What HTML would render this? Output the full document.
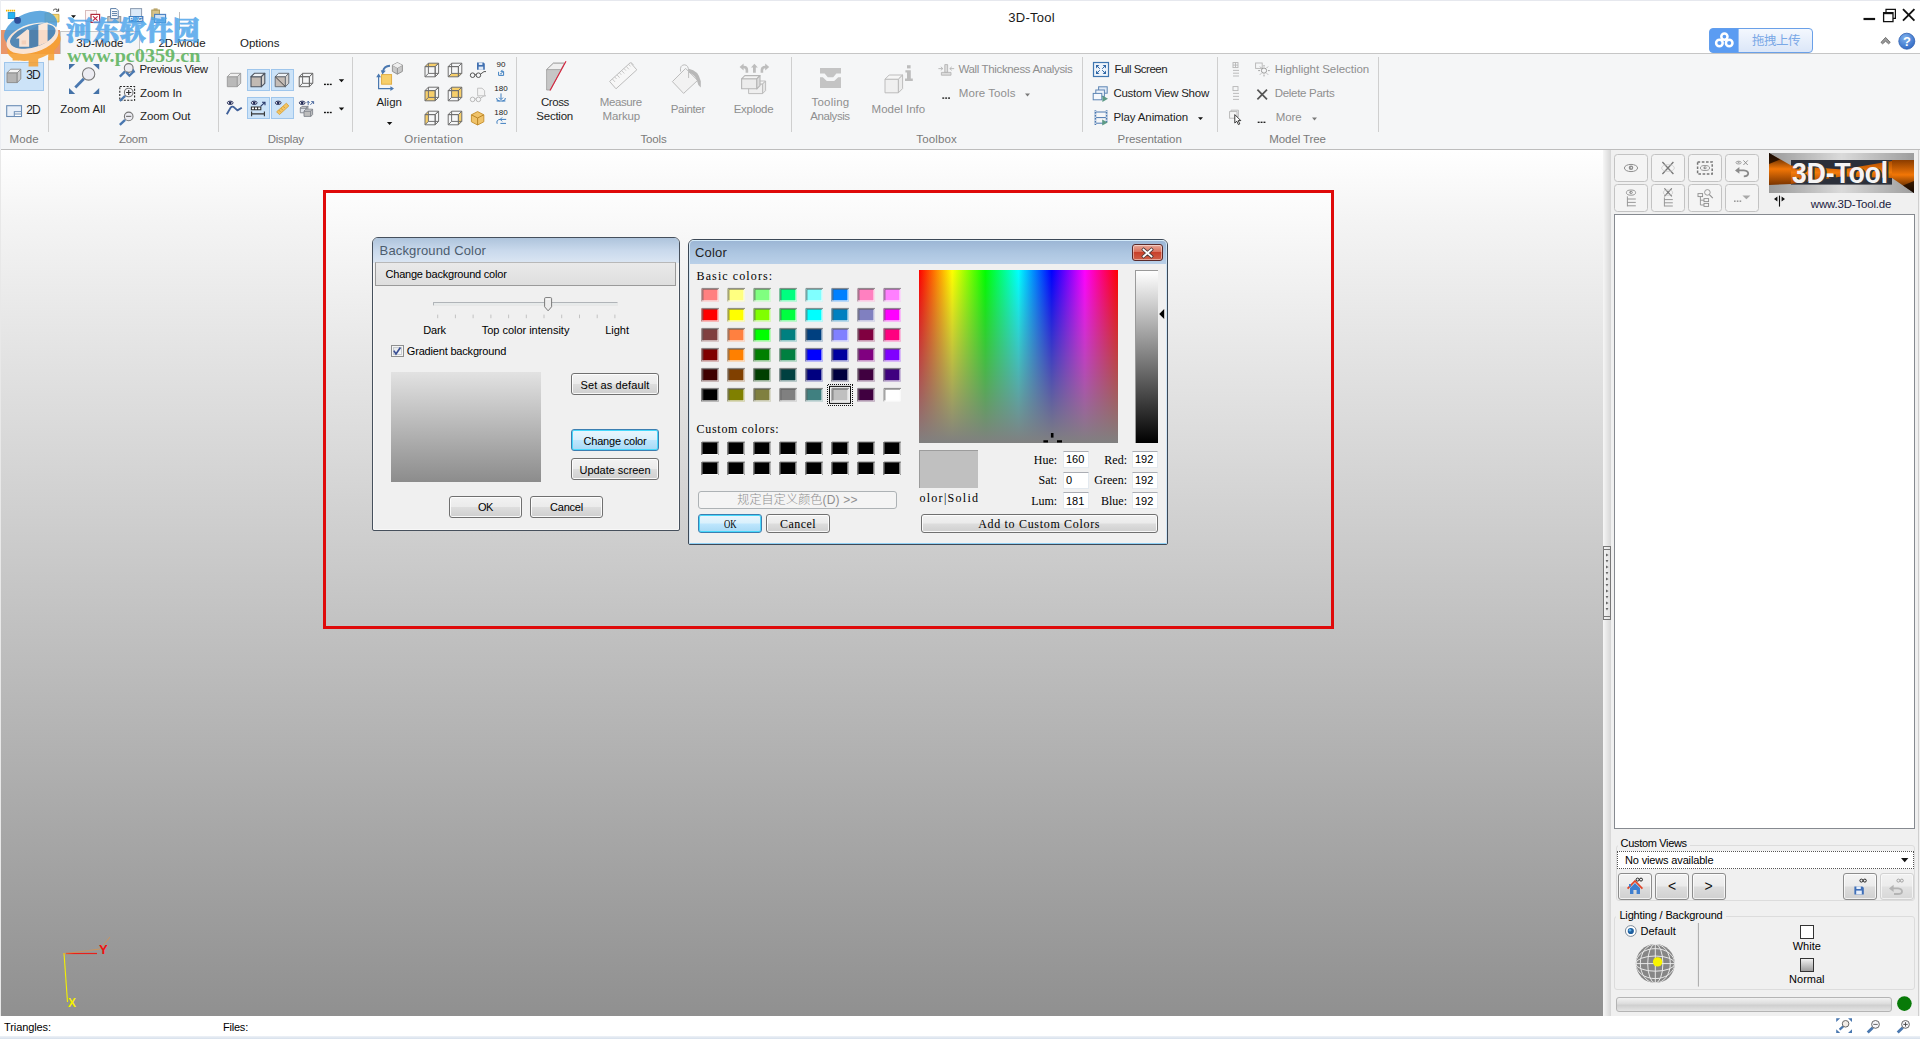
<!DOCTYPE html>
<html lang="en"><head><meta charset="utf-8"><title>3D-Tool</title>
<style>
html,body{margin:0;padding:0;}
body{width:1920px;height:1039px;overflow:hidden;position:relative;background:#fff;font-family:"Liberation Sans",sans-serif;font-size:11px;color:#000;}
.b{position:absolute;box-sizing:border-box;display:block;}
.t{position:absolute;white-space:nowrap;display:block;}
svg{overflow:visible;}

</style></head>
<body>
<!-- frame -->
<div class="b" style="left:0px;top:53px;width:1920px;height:97px;background:#f5f6f7;border-top:1px solid #c6c6c6;border-bottom:1px solid #bdbdbd;"></div>
<div class="b" style="left:0px;top:150px;width:1603px;height:866px;background:linear-gradient(to bottom,#ffffff 0%,#f4f4f4 8%,#909090 100%);"></div>
<div class="b" style="left:0px;top:150px;width:1px;height:866px;background:#e8e8e8;"></div>
<div class="b" style="left:323px;top:190px;width:1011px;height:439px;border:3px solid #df0a0a;background:linear-gradient(to bottom,#fdfdfd 0%,#c2c2c2 100%);"></div>
<div class="b" style="left:1603px;top:150px;width:8px;height:866px;background:linear-gradient(to right,#f6f6f6,#d6d6d6);"></div>
<div class="b" style="left:1603px;top:546px;width:8px;height:74px;border:1px solid #777;background:linear-gradient(to right,#f4f4f4,#e0e0e0);"></div>
<div class="b" style="left:1604px;top:549px;width:6px;height:1px;background:#777;"></div>
<div class="b" style="left:1604px;top:616px;width:6px;height:1px;background:#777;"></div>
<svg class="b" style="left:1605px;top:0px;" width="6" height="1039" viewBox="0 0 6 1039"><path d="M1 553.4 l2.6 1.6 l-2.6 1.6z" fill="#666"/><path d="M0.6 560 l2.8 0 l-1.4 2.6z" fill="#666"/><path d="M1 565.4 l2.6 1.6 l-2.6 1.6z" fill="#666"/><path d="M0.6 572 l2.8 0 l-1.4 2.6z" fill="#666"/><path d="M1 577.4 l2.6 1.6 l-2.6 1.6z" fill="#666"/><path d="M0.6 584 l2.8 0 l-1.4 2.6z" fill="#666"/><path d="M1 589.4 l2.6 1.6 l-2.6 1.6z" fill="#666"/><path d="M0.6 596 l2.8 0 l-1.4 2.6z" fill="#666"/><path d="M1 601.4 l2.6 1.6 l-2.6 1.6z" fill="#666"/><path d="M0.6 608 l2.8 0 l-1.4 2.6z" fill="#666"/></svg>
<div class="b" style="left:1611px;top:150px;width:309px;height:866px;background:#f0f0f0;"></div>
<div class="b" style="left:0px;top:1016px;width:1920px;height:23px;background:#ffffff;"></div>
<div class="b" style="left:0px;top:1036px;width:1920px;height:3px;background:linear-gradient(to bottom,#eef2f7,#d7e0ec);"></div>
<span class="t" style="left:4.0px;top:1019.5px;font-size:11px;line-height:15px;color:#000;letter-spacing:-0.089px;">Triangles:</span>
<span class="t" style="left:223.0px;top:1019.5px;font-size:11px;line-height:15px;color:#000;letter-spacing:-0.214px;">Files:</span>
<svg class="b" style="left:0px;top:0px;" width="200" height="1039" viewBox="0 0 200 1039"><path d="M64 953 L67.5 1002" stroke="#f4f000" stroke-width="1.1" fill="none"/><path d="M66 953.5 L97 953.5" stroke="#e8201a" stroke-width="1.2" fill="none"/><path d="M63 954 L100 949 L110 937" stroke="#f09030" stroke-width="1" fill="none" opacity="0.55"/></svg>
<span class="t" style="left:99.0px;top:940.5px;font-size:13px;line-height:17px;color:#f01010;font-weight:bold;">Y</span>
<span class="t" style="left:68.0px;top:994.5px;font-size:12px;line-height:16px;color:#f4f000;font-weight:bold;">X</span>
<!-- ribbon -->
<div class="b" style="left:48px;top:57px;width:1px;height:75px;background:#cfcfcf;"></div>
<div class="b" style="left:218px;top:57px;width:1px;height:75px;background:#cfcfcf;"></div>
<div class="b" style="left:352px;top:57px;width:1px;height:75px;background:#cfcfcf;"></div>
<div class="b" style="left:516px;top:57px;width:1px;height:75px;background:#cfcfcf;"></div>
<div class="b" style="left:791px;top:57px;width:1px;height:75px;background:#cfcfcf;"></div>
<div class="b" style="left:1082px;top:57px;width:1px;height:75px;background:#cfcfcf;"></div>
<div class="b" style="left:1217px;top:57px;width:1px;height:75px;background:#cfcfcf;"></div>
<div class="b" style="left:1378px;top:57px;width:1px;height:75px;background:#cfcfcf;"></div>
<span class="t" style="left:9.6px;top:131.6px;font-size:11.5px;line-height:15.5px;color:#7a7a7a;letter-spacing:0.055px;">Mode</span>
<span class="t" style="left:119.0px;top:131.6px;font-size:11.5px;line-height:15.5px;color:#7a7a7a;letter-spacing:-0.277px;">Zoom</span>
<span class="t" style="left:267.7px;top:131.6px;font-size:11.5px;line-height:15.5px;color:#7a7a7a;letter-spacing:-0.217px;">Display</span>
<span class="t" style="left:404.3px;top:131.6px;font-size:11.5px;line-height:15.5px;color:#7a7a7a;letter-spacing:0.249px;">Orientation</span>
<span class="t" style="left:640.5px;top:131.6px;font-size:11.5px;line-height:15.5px;color:#7a7a7a;letter-spacing:-0.172px;">Tools</span>
<span class="t" style="left:916.3px;top:131.6px;font-size:11.5px;line-height:15.5px;color:#7a7a7a;letter-spacing:0.137px;">Toolbox</span>
<span class="t" style="left:1117.5px;top:131.6px;font-size:11.5px;line-height:15.5px;color:#7a7a7a;letter-spacing:-0.023px;">Presentation</span>
<span class="t" style="left:1269.3px;top:131.6px;font-size:11.5px;line-height:15.5px;color:#7a7a7a;letter-spacing:-0.093px;">Model Tree</span>
<div class="b" style="left:4px;top:61.5px;width:40px;height:29px;background:#cce3f8;border:1px solid #9fc6ec;"></div>
<span class="t" style="left:26.3px;top:67.0px;font-size:12px;line-height:16px;color:#1e1e1e;letter-spacing:-1.072px;">3D</span>
<span class="t" style="left:26.3px;top:102.0px;font-size:12px;line-height:16px;color:#1e1e1e;letter-spacing:-1.072px;">2D</span>
<span class="t" style="left:60.2px;top:101.8px;font-size:11.5px;line-height:15.5px;color:#1e1e1e;letter-spacing:0.056px;">Zoom All</span>
<span class="t" style="left:139.5px;top:61.5px;font-size:11.5px;line-height:15.5px;color:#1e1e1e;letter-spacing:-0.335px;">Previous View</span>
<span class="t" style="left:140.0px;top:85.5px;font-size:11.5px;line-height:15.5px;color:#1e1e1e;letter-spacing:-0.027px;">Zoom In</span>
<span class="t" style="left:140.0px;top:109.3px;font-size:11.5px;line-height:15.5px;color:#1e1e1e;letter-spacing:-0.093px;">Zoom Out</span>
<div class="b" style="left:247px;top:69px;width:23px;height:22px;background:#cce3f8;border:1px solid #9fc6ec;"></div>
<div class="b" style="left:271px;top:69px;width:23px;height:22px;background:#cce3f8;border:1px solid #9fc6ec;"></div>
<div class="b" style="left:247px;top:97px;width:23px;height:22px;background:#cce3f8;border:1px solid #9fc6ec;"></div>
<div class="b" style="left:271px;top:97px;width:23px;height:22px;background:#cce3f8;border:1px solid #9fc6ec;"></div>
<span class="t" style="left:376.4px;top:94.7px;font-size:11.5px;line-height:15.5px;color:#1e1e1e;letter-spacing:0.004px;">Align</span>
<span class="t" style="left:501.0px;transform:translateX(-50%);top:60.1px;font-size:8px;line-height:9px;color:#222;">90</span>
<span class="t" style="left:501.0px;transform:translateX(-50%);top:84.1px;font-size:8px;line-height:9px;color:#222;">180</span>
<span class="t" style="left:501.0px;transform:translateX(-50%);top:108.1px;font-size:8px;line-height:9px;color:#222;">180</span>
<span class="t" style="left:541.0px;top:94.7px;font-size:11.5px;line-height:15.5px;color:#1e1e1e;letter-spacing:-0.466px;">Cross</span>
<span class="t" style="left:536.3px;top:108.5px;font-size:11.5px;line-height:15.5px;color:#1e1e1e;letter-spacing:-0.237px;">Section</span>
<span class="t" style="left:599.8px;top:94.7px;font-size:11.5px;line-height:15.5px;color:#8f8f8f;letter-spacing:-0.407px;">Measure</span>
<span class="t" style="left:602.5px;top:108.5px;font-size:11.5px;line-height:15.5px;color:#8f8f8f;letter-spacing:-0.143px;">Markup</span>
<span class="t" style="left:670.7px;top:101.5px;font-size:11.5px;line-height:15.5px;color:#8f8f8f;letter-spacing:-0.305px;">Painter</span>
<span class="t" style="left:733.7px;top:101.5px;font-size:11.5px;line-height:15.5px;color:#8f8f8f;letter-spacing:-0.266px;">Explode</span>
<span class="t" style="left:811.6px;top:94.7px;font-size:11.5px;line-height:15.5px;color:#8f8f8f;letter-spacing:0.192px;">Tooling</span>
<span class="t" style="left:810.3px;top:108.5px;font-size:11.5px;line-height:15.5px;color:#8f8f8f;letter-spacing:-0.429px;">Analysis</span>
<span class="t" style="left:871.6px;top:101.5px;font-size:11.5px;line-height:15.5px;color:#8f8f8f;letter-spacing:-0.010px;">Model Info</span>
<span class="t" style="left:958.4px;top:61.5px;font-size:11.5px;line-height:15.5px;color:#8f8f8f;letter-spacing:-0.347px;">Wall Thickness Analysis</span>
<span class="t" style="left:958.8px;top:85.5px;font-size:11.5px;line-height:15.5px;color:#8f8f8f;letter-spacing:0.065px;">More Tools</span>
<span class="t" style="left:1114.4px;top:61.8px;font-size:11.5px;line-height:15.5px;color:#1e1e1e;letter-spacing:-0.488px;">Full Screen</span>
<span class="t" style="left:1113.4px;top:85.7px;font-size:11.5px;line-height:15.5px;color:#1e1e1e;letter-spacing:-0.244px;">Custom View Show</span>
<span class="t" style="left:1113.4px;top:109.5px;font-size:11.5px;line-height:15.5px;color:#1e1e1e;letter-spacing:-0.106px;">Play Animation</span>
<span class="t" style="left:1274.7px;top:61.8px;font-size:11.5px;line-height:15.5px;color:#8f8f8f;letter-spacing:-0.040px;">Highlight Selection</span>
<span class="t" style="left:1274.7px;top:85.7px;font-size:11.5px;line-height:15.5px;color:#8f8f8f;letter-spacing:-0.298px;">Delete Parts</span>
<span class="t" style="left:1275.8px;top:109.5px;font-size:11.5px;line-height:15.5px;color:#8f8f8f;letter-spacing:-0.101px;">More</span>
<svg class="b" style="left:0px;top:0px;" width="1920" height="150" viewBox="0 0 1920 150"><path d="M7 72.8 H17.2 V82.6 H7z" fill="#b4b4b4" stroke="#8a8a8a" stroke-width="0.9" stroke-linejoin="round"/><path d="M7 72.8 L10.6 69.2 H20.8 L17.2 72.8z" fill="#f4f4f4" stroke="#8a8a8a" stroke-width="0.9" stroke-linejoin="round"/><path d="M17.2 72.8 L20.8 69.2 V79 L17.2 82.6z" fill="#c9c9c9" stroke="#8a8a8a" stroke-width="0.9" stroke-linejoin="round"/><rect x="6.7" y="105.7" width="14.8" height="10.8" fill="#e9f0f9" stroke="#6b8db6" stroke-width="1.1"/><rect x="14.3" y="111.7" width="7.2" height="4.8" fill="#fff" stroke="#6b8db6" stroke-width="1"/><path d="M14.3 114 h7.2" stroke="#6b8db6" stroke-width="1"/><path d="M69 64 h6.2 l-6.2 5.8z M99.2 64 v5.8 l-6.2 -5.8z M69 93.9 v-5.8 l6.2 5.8z M99.2 93.9 h-6.2 l6.2 -5.8z" fill="#4472a8"/><path d="M83.85 78.76 L75.30 87.50" stroke="#4a78b0" stroke-width="2.8" fill="none"/><circle cx="88.6" cy="73.9" r="6.2" fill="#ececf2" stroke="#777" stroke-width="1.1"/><path d="M125.10 71.47 L119.80 76.60" stroke="#4a78b0" stroke-width="2.4" fill="none"/><circle cx="128.7" cy="68" r="4.4" fill="#ececf2" stroke="#777" stroke-width="1.1"/><path d="M126.2 72.2 l3.2 3.4 l4.6 -4.4" fill="none" stroke="#4a78b0" stroke-width="2.2"/><path d="M133.4 68.6 l2 3.6 l-3.8 0.4z" fill="#4a78b0"/><rect x="119.8" y="86.5" width="14.8" height="13.8" fill="none" stroke="#222" stroke-width="1.1" stroke-dasharray="2 1.4"/><path d="M125.16 95.88 L119.80 101.00" stroke="#4a78b0" stroke-width="2.4" fill="none"/><circle cx="128.7" cy="92.5" r="4.3" fill="#f4f4f8" stroke="#777" stroke-width="1.1"/><path d="M126.1 92.5 h5.2 M128.7 89.9 v5.2" stroke="#333" stroke-width="1.1"/><path d="M125.14 119.76 L119.80 124.80" stroke="#4a78b0" stroke-width="2.4" fill="none"/><circle cx="128.7" cy="116.4" r="4.3" fill="#ececf2" stroke="#777" stroke-width="1.1"/><path d="M126.1 116.4 h5.2" stroke="#777" stroke-width="1.2"/><path d="M227.3 76.7 H237.3 V86.7 H227.3z" fill="#b9b9b9" stroke="#9a9a9a" stroke-width="0.9" stroke-linejoin="round"/><path d="M227.3 76.7 L230.7 73.3 H240.7 L237.3 76.7z" fill="#f0f0f0" stroke="#9a9a9a" stroke-width="0.9" stroke-linejoin="round"/><path d="M237.3 76.7 L240.7 73.3 V83.3 L237.3 86.7z" fill="#cfcfcf" stroke="#9a9a9a" stroke-width="0.9" stroke-linejoin="round"/><path d="M251 76.7 H261.4 V86.7 H251z" fill="#c2bab3" stroke="#4e5560" stroke-width="1.1" stroke-linejoin="round"/><path d="M251 76.7 L254.4 73.3 H264.8 L261.4 76.7z" fill="#eef2f6" stroke="#4e5560" stroke-width="1.1" stroke-linejoin="round"/><path d="M261.4 76.7 L264.8 73.3 V83.3 L261.4 86.7z" fill="#d5d2cf" stroke="#4e5560" stroke-width="1.1" stroke-linejoin="round"/><path d="M275.2 76.7 H285.4 V86.7 H275.2z" fill="#c4bcb6" stroke="#6a7078" stroke-width="1" stroke-linejoin="round"/><path d="M275.2 76.7 L278.6 73.3 H288.8 L285.4 76.7z" fill="#eef2f6" stroke="#6a7078" stroke-width="1" stroke-linejoin="round"/><path d="M285.4 76.7 L288.8 73.3 V83.3 L285.4 86.7z" fill="#d5d2cf" stroke="#6a7078" stroke-width="1" stroke-linejoin="round"/><path d="M275.2 76.7 L285.4 86.7" stroke="#444" stroke-width="1"/><path d="M299.2 76.7 H309.4 V86.7 H299.2z" fill="none" stroke="#6a6a6a" stroke-width="1" stroke-linejoin="round"/><path d="M299.2 76.7 L302.6 73.3 H312.8 L309.4 76.7z" fill="none" stroke="#6a6a6a" stroke-width="1" stroke-linejoin="round"/><path d="M309.4 76.7 L312.8 73.3 V83.3 L309.4 86.7z" fill="none" stroke="#6a6a6a" stroke-width="1" stroke-linejoin="round"/><path d="M302.6 73.3 V83.3 H312.8 M302.6 83.3 L299.2 86.7" fill="none" stroke="#6a6a6a" stroke-width="1"/><rect x="324" y="83.7" width="1.9" height="1.4" fill="#111"/><rect x="326.9" y="83.7" width="1.9" height="1.4" fill="#111"/><rect x="329.8" y="83.7" width="1.9" height="1.4" fill="#111"/><path d="M338.8 79.3 h5.4 l-2.7 3z" fill="#111"/><rect x="324" y="111.8" width="1.9" height="1.4" fill="#111"/><rect x="326.9" y="111.8" width="1.9" height="1.4" fill="#111"/><rect x="329.8" y="111.8" width="1.9" height="1.4" fill="#111"/><path d="M338.8 107.4 h5.4 l-2.7 3z" fill="#111"/><ellipse cx="230.2" cy="102.8" rx="2.9" ry="1.7" fill="#fff" stroke="#1c2450" stroke-width="0.9"/><circle cx="230.2" cy="102.8" r="1.35" fill="#1c2450"/><path d="M226.8 114.2 L230.6 107.6 Q232.4 105.6 234.4 107.6 L237.4 110.4 L241.8 107.8" fill="none" stroke="#41619a" stroke-width="1.9" stroke-linejoin="round"/><ellipse cx="254.2" cy="102.8" rx="2.9" ry="1.7" fill="#fff" stroke="#1c2450" stroke-width="0.9"/><circle cx="254.2" cy="102.8" r="1.35" fill="#1c2450"/><path d="M251.4 107 h9.4 v2.8 h-9.4z M254.5 107 v2.8 M257.6 107 v2.8" fill="#fff" stroke="#333" stroke-width="1.1"/><path d="M260.6 106.4 L264.6 102.6 M262 102.2 h3 v3" fill="none" stroke="#2a3a6a" stroke-width="1.1"/><path d="M251.6 111.6 v4.6 M264.4 111.6 v4.6 M251.6 113.9 h12.8" fill="none" stroke="#333" stroke-width="1.1"/><ellipse cx="278.2" cy="102.8" rx="2.9" ry="1.7" fill="#fff" stroke="#1c2450" stroke-width="0.9"/><circle cx="278.2" cy="102.8" r="1.35" fill="#1c2450"/><path d="M276.6 111.8 L286.4 103.2 L288.8 106 L279.4 114.6z" fill="#f3c462" stroke="#d9a33a" stroke-width="0.9"/><path d="M279.2 110.4 l1 1.2 M281.4 108.5 l1 1.2 M283.6 106.6 l1 1.2" stroke="#b98420" stroke-width="0.8"/><ellipse cx="302.2" cy="102.8" rx="2.9" ry="1.7" fill="#fff" stroke="#1c2450" stroke-width="0.9"/><circle cx="302.2" cy="102.8" r="1.35" fill="#1c2450"/><path d="M308.2 105.2 v-3.6 M306.8 102.8 l1.4 -1.6 l1.4 1.6 M310.4 104.8 l3 -3 M311.2 101.6 h2.4 v2.4" fill="none" stroke="#3b5c96" stroke-width="0.9"/><path d="M300.3 108 H306.3 V112.8 H300.3z" fill="#dfe3ea" stroke="#7a7f88" stroke-width="0.9" stroke-linejoin="round"/><path d="M300.3 108 L301.9 106.4 H307.9 L306.3 108z" fill="#f2f2f2" stroke="#7a7f88" stroke-width="0.9" stroke-linejoin="round"/><path d="M306.3 108 L307.9 106.4 V111.2 L306.3 112.8z" fill="#c8c8c8" stroke="#7a7f88" stroke-width="0.9" stroke-linejoin="round"/><path d="M304 111 H310.8 V116.4 H304z" fill="#bdbdbd" stroke="#80858c" stroke-width="0.9" stroke-linejoin="round"/><path d="M304 111 L305.8 109.2 H312.6 L310.8 111z" fill="#e6e6e6" stroke="#80858c" stroke-width="0.9" stroke-linejoin="round"/><path d="M310.8 111 L312.6 109.2 V114.6 L310.8 116.4z" fill="#cfcfcf" stroke="#80858c" stroke-width="0.9" stroke-linejoin="round"/><path d="M378.6 74.5 V88.6 H392.6" fill="none" stroke="#4a78b0" stroke-width="1.2"/><path d="M376.2 77.2 l2.4 -3.6 l2.4 3.6z M390.4 86.2 l3.6 2.4 l-3.6 2.4z" fill="#4a78b0"/><rect x="381.6" y="74.6" width="10" height="9.6" fill="#f7cf6b" stroke="#e0a93a" stroke-width="0.9"/><path d="M383 71.4 q1 -5.2 7 -5.6" fill="none" stroke="#4a78b0" stroke-width="2"/><path d="M380.8 70.2 l5 0.6 l-3.4 3.6z" fill="#4a78b0"/><path d="M397.4 62.6 l5 2.6 v6.2 l-5 2.8 l-5 -2.8 v-6.2z" fill="#c9c9c9" stroke="#8d8d8d" stroke-width="0.9"/><path d="M392.4 65.2 l5 2.8 l5 -2.8 M397.4 68 v6.2" fill="none" stroke="#8d8d8d" stroke-width="0.9"/><path d="M397.4 62.8 l4.8 2.5 l-4.8 2.6 l-4.8 -2.6z" fill="#efefef"/><path d="M386.9 122 h5.4 l-2.7 3z" fill="#111"/><path d="M425 66.6 H435.2 V76.8 H425z" fill="none" stroke="#707070" stroke-width="1" stroke-linejoin="round"/><path d="M425 66.6 L428.4 63.2 H438.6 L435.2 66.6z" fill="#f7cf6b" stroke="#707070" stroke-width="1" stroke-linejoin="round"/><path d="M435.2 66.6 L438.6 63.2 V73.4 L435.2 76.8z" fill="none" stroke="#707070" stroke-width="1" stroke-linejoin="round"/><path d="M428.4 63.2 V73.4 H438.6 M428.4 73.4 L425 76.8" fill="none" stroke="#707070" stroke-width="1"/><path d="M448.2 76.8 L451.6 73.4 H461.8 L458.4 76.8z" fill="#f7cf6b"/><path d="M448.2 66.6 H458.4 V76.8 H448.2z" fill="none" stroke="#707070" stroke-width="1" stroke-linejoin="round"/><path d="M448.2 66.6 L451.6 63.2 H461.8 L458.4 66.6z" fill="none" stroke="#707070" stroke-width="1" stroke-linejoin="round"/><path d="M458.4 66.6 L461.8 63.2 V73.4 L458.4 76.8z" fill="none" stroke="#707070" stroke-width="1" stroke-linejoin="round"/><path d="M451.6 63.2 V73.4 H461.8 M451.6 73.4 L448.2 76.8" fill="none" stroke="#707070" stroke-width="1"/><path d="M425 90.6 H435.2 V100.8 H425z" fill="#f7cf6b" stroke="#707070" stroke-width="1" stroke-linejoin="round"/><path d="M425 90.6 L428.4 87.2 H438.6 L435.2 90.6z" fill="none" stroke="#707070" stroke-width="1" stroke-linejoin="round"/><path d="M435.2 90.6 L438.6 87.2 V97.4 L435.2 100.8z" fill="none" stroke="#707070" stroke-width="1" stroke-linejoin="round"/><path d="M428.4 87.2 V97.4 H438.6 M428.4 97.4 L425 100.8" fill="none" stroke="#707070" stroke-width="1"/><rect x="451.6" y="87.2" width="10.2" height="10.2" fill="#f7cf6b"/><path d="M448.2 90.6 H458.4 V100.8 H448.2z" fill="none" stroke="#707070" stroke-width="1" stroke-linejoin="round"/><path d="M448.2 90.6 L451.6 87.2 H461.8 L458.4 90.6z" fill="none" stroke="#707070" stroke-width="1" stroke-linejoin="round"/><path d="M458.4 90.6 L461.8 87.2 V97.4 L458.4 100.8z" fill="none" stroke="#707070" stroke-width="1" stroke-linejoin="round"/><path d="M451.6 87.2 V97.4 H461.8 M451.6 97.4 L448.2 100.8" fill="none" stroke="#707070" stroke-width="1"/><path d="M425 114.6 L428.4 111.2 V121.4 L425 124.8z" fill="#f7cf6b"/><path d="M425 114.6 H435.2 V124.8 H425z" fill="none" stroke="#707070" stroke-width="1" stroke-linejoin="round"/><path d="M425 114.6 L428.4 111.2 H438.6 L435.2 114.6z" fill="none" stroke="#707070" stroke-width="1" stroke-linejoin="round"/><path d="M435.2 114.6 L438.6 111.2 V121.4 L435.2 124.8z" fill="none" stroke="#707070" stroke-width="1" stroke-linejoin="round"/><path d="M428.4 111.2 V121.4 H438.6 M428.4 121.4 L425 124.8" fill="none" stroke="#707070" stroke-width="1"/><path d="M448.2 114.6 H458.4 V124.8 H448.2z" fill="none" stroke="#707070" stroke-width="1" stroke-linejoin="round"/><path d="M448.2 114.6 L451.6 111.2 H461.8 L458.4 114.6z" fill="none" stroke="#707070" stroke-width="1" stroke-linejoin="round"/><path d="M458.4 114.6 L461.8 111.2 V121.4 L458.4 124.8z" fill="#f7cf6b" stroke="#707070" stroke-width="1" stroke-linejoin="round"/><path d="M451.6 111.2 V121.4 H461.8 M451.6 121.4 L448.2 124.8" fill="none" stroke="#707070" stroke-width="1"/><circle cx="472.6" cy="75.2" r="2.3" fill="none" stroke="#555" stroke-width="1"/><circle cx="478.4" cy="75.2" r="2.3" fill="none" stroke="#555" stroke-width="1"/><path d="M474.9 74.8 h1.4 M480.4 74.2 l3.6 -2.6 h2" fill="none" stroke="#555" stroke-width="1"/><path d="M477 62.6 h6.6 l1.2 1.2 v6 h-7.8z" fill="#3f6fb0"/><rect x="478.8" y="62.6" width="3.6" height="2.4" fill="#dfe9f6"/><rect x="478.6" y="66.6" width="4.6" height="3.2" fill="#dfe9f6"/><circle cx="472.6" cy="99.4" r="2.3" fill="none" stroke="#b9b9b9" stroke-width="1"/><circle cx="478.4" cy="99.4" r="2.3" fill="none" stroke="#b9b9b9" stroke-width="1"/><path d="M474.9 99 h1.4 M480.4 98.4 l3.6 -2.6 h2" fill="none" stroke="#b9b9b9" stroke-width="1"/><path d="M477.6 88.2 h4.4 l2.6 2.4 v5.2 h-7z" fill="#f4f4f4" stroke="#bdbdbd" stroke-width="0.9"/><path d="M477.6 111.6 l6.2 3.2 v7 l-6.2 3.2 l-6.2 -3.2 v-7z" fill="#f0c36a" stroke="#c99536" stroke-width="1"/><path d="M471.4 114.8 l6.2 3.2 l6.2 -3.2 M477.6 118 v7" fill="none" stroke="#b98526" stroke-width="1"/><path d="M498.6 71.8 v3.6 h5 v-4 h-2.4 M502.6 69.8 l-1.6 1.6 l1.6 1.6" fill="none" stroke="#3f7fc0" stroke-width="1"/><circle cx="501" cy="73.8" r="0.8" fill="#3f7fc0"/><path d="M501 93.4 v6 M499 97.6 l2 2 l2 -2 M496.6 98 q0 3 3 3 M505.4 98 q0 3 -3 3 M496.6 101 h8.8" fill="none" stroke="#3f7fc0" stroke-width="1"/><path d="M497.2 123.8 q-1.4 -4 3 -4.4 h6 M502.2 117.4 l-2 2 l2 2 M500.4 123.4 h5.6" fill="none" stroke="#3f7fc0" stroke-width="1"/><path d="M546.6 69.6 L553.4 63.2 H564.6 L550.4 90 H546.6z" fill="#c6c6c6" stroke="#9c9c9c" stroke-width="0.8"/><path d="M546.6 69.6 L553.4 63.2 H564.6 L560.8 69.6z" fill="#efefef" stroke="#9c9c9c" stroke-width="0.8"/><path d="M566 61.2 L550 90.6" stroke="#d8203a" stroke-width="1.1"/><path d="M609.6 81.4 L630.4 62.6 L636.8 69.8 L616 88.8z" fill="#f7f7f7" stroke="#bdbdbd" stroke-width="1"/><path d="M612.4 79.0 l2.6 2.9 M614.7 76.9 l1.9 2.1 M617.0 74.8 l2.6 2.9 M619.4 72.7 l1.9 2.1 M621.7 70.6 l2.6 2.9 M624.0 68.5 l1.9 2.1 M626.3 66.4 l2.6 2.9 M628.6 64.3 l1.9 2.1 M631.0 62.2 l2.6 2.9" stroke="#bdbdbd" stroke-width="0.8" fill="none"/><path d="M672.4 81.6 L685.6 68.4 L697.6 80.4 L683.6 93.4z" fill="#f2f2f2" stroke="#bdbdbd" stroke-width="1"/><path d="M680.6 71.6 q-1 -6.4 3.6 -6.8 q4.6 0 4.4 6.8 v6.4" fill="none" stroke="#bdbdbd" stroke-width="1"/><path d="M688.8 68.8 q9.6 1.6 12 12.4 v6.4 q-3.2 -2.4 -3.8 -6.8 q-1.4 -5.6 -8.2 -8.4z" fill="#b8b8b8"/><path d="M748.6 84 H762.6 V93.6 H748.6z" fill="#efefef" stroke="#bdbdbd" stroke-width="1" stroke-linejoin="round"/><path d="M748.6 84 L751.6 81 H765.6 L762.6 84z" fill="#f4f4f4" stroke="#bdbdbd" stroke-width="1" stroke-linejoin="round"/><path d="M762.6 84 L765.6 81 V90.6 L762.6 93.6z" fill="#e6e6e6" stroke="#bdbdbd" stroke-width="1" stroke-linejoin="round"/><path d="M741.6 78.8 H756.8 V88.8 H741.6z" fill="#ececec" stroke="#b6b6b6" stroke-width="1.1" stroke-linejoin="round"/><path d="M741.6 78.8 L744.8 75.6 H760 L756.8 78.8z" fill="#f4f4f4" stroke="#b6b6b6" stroke-width="1.1" stroke-linejoin="round"/><path d="M756.8 78.8 L760 75.6 V85.6 L756.8 88.8z" fill="#dedede" stroke="#b6b6b6" stroke-width="1.1" stroke-linejoin="round"/><path d="M753 72.8 v-5.4 h-2 l3.4 -3.6 l3.4 3.6 h-2 v5.4z" fill="#bdbdbd"/><path d="M745.6 72.8 v-2.6 q0 -2 -2 -2 v2.2 l-4 -3.4 l4 -3.4 v2.2 q4.6 0 4.6 4.4 v2.6z" fill="#bdbdbd"/><path d="M763.2 72.8 v-2.6 q0 -2 2 -2 v2.2 l4 -3.4 l-4 -3.4 v2.2 q-4.6 0 -4.6 4.4 v2.6z" fill="#bdbdbd"/><path d="M820 68 h21 v5.6 h-4.6 l-3.2 3.6 h-5.4 l-3.2 -3.6 h-4.6z M820 77.2 l2.8 0 l4 3.8 h7.4 l4 -3.8 h2.8 v10.8 h-21z" fill="#c4c4c4"/><path d="M885 79.2 H898.4 V92.8 H885z" fill="#f0f0f0" stroke="#bcbcbc" stroke-width="1" stroke-linejoin="round"/><path d="M885 79.2 L889.2 75 H902.6 L898.4 79.2z" fill="#f6f6f6" stroke="#bcbcbc" stroke-width="1" stroke-linejoin="round"/><path d="M898.4 79.2 L902.6 75 V88.6 L898.4 92.8z" fill="#ececec" stroke="#bcbcbc" stroke-width="1" stroke-linejoin="round"/><rect x="907" y="65.2" width="3.6" height="3.2" fill="#bdbdbd"/><path d="M905.4 70.2 h5.4 v8.4 h2 v2.4 h-7.8 v-2.4 h2 v-6 h-1.6z" fill="#bdbdbd"/><path d="M941.4 72.4 h9.6 v2.8 h-9.6z M944.8 64.6 h2.8 v7.8 h-2.8z" fill="#dcdcdc" stroke="#b5b5b5" stroke-width="0.9"/><path d="M938.4 68.6 h4.4 M940.8 66.8 l2 1.8 l-2 1.8 M954.2 68.6 h-4.4 M951.8 66.8 l-2 1.8 l2 1.8" fill="none" stroke="#b5b5b5" stroke-width="0.9"/><rect x="942.3" y="97.4" width="1.9" height="1.4" fill="#222"/><rect x="945.2" y="97.4" width="1.9" height="1.4" fill="#222"/><rect x="948.1" y="97.4" width="1.9" height="1.4" fill="#222"/><path d="M1025 93.6 h5 l-2.5 2.8z" fill="#7a7a7a"/><rect x="1093.5" y="62.5" width="15" height="14" fill="#eef4fb" stroke="#3f76b0" stroke-width="1.2"/><path d="M1096 65 h3.4 l-3.4 3.4z M1106 65 v3.4 l-3.4 -3.4z M1096 74 v-3.4 l3.4 3.4z M1106 74 h-3.4 l3.4 -3.4z" fill="#2f67a6"/><path d="M1097.4 66.4 l2.4 2.4 M1104.6 66.4 l-2.4 2.4 M1097.4 72.6 l2.4 -2.4 M1104.6 72.6 l-2.4 -2.4" stroke="#2f67a6" stroke-width="1"/><rect x="1098.6" y="86.8" width="8.6" height="6.4" fill="#dfe9f6" stroke="#5e86b4" stroke-width="1"/><rect x="1095.8" y="90" width="8.6" height="6.4" fill="#eef3fa" stroke="#5e86b4" stroke-width="1"/><rect x="1093.2" y="93.4" width="8.6" height="6.4" fill="#f6f9fd" stroke="#5e86b4" stroke-width="1"/><path d="M1102.4 95.6 l5.6 3.2 l-5.6 3.2z" fill="#5d9a86"/><path d="M1095.4 110 v15 M1106.6 110 v12" stroke="#4a78b0" stroke-width="1.6"/><path d="M1095.4 112 h11.2 M1095.4 117.6 h11.2 M1095.4 123.2 h8" stroke="#4a78b0" stroke-width="1"/><path d="M1094.6 111.2 h1.6 M1094.6 114.2 h1.6 M1094.6 117.2 h1.6 M1094.6 120.2 h1.6 M1094.6 123.2 h1.6 M1105.8 111.2 h1.6 M1105.8 114.2 h1.6 M1105.8 117.2 h1.6 M1105.8 120.2 h1.6" stroke="#fff" stroke-width="1"/><path d="M1102.2 119.6 l5.6 3 l-5.6 3z" fill="#5d9a86"/><path d="M1198 117.2 h5 l-2.5 2.8z" fill="#111"/><rect x="1233" y="62.6" width="5" height="5" fill="none" stroke="#b5b5b5" stroke-width="0.9"/><path d="M1235.5 62.6 v5 M1233 65.1 h5 M1233 70.4 h6 M1233 73.2 h6 M1233 76 h6" stroke="#b5b5b5" stroke-width="0.9"/><rect x="1233" y="86.6" width="5" height="4" fill="none" stroke="#b5b5b5" stroke-width="0.9"/><path d="M1233 93.4 h6 M1233 96.4 h6 M1233 99.4 h6" stroke="#b5b5b5" stroke-width="0.9"/><rect x="1229.6" y="111.6" width="7.4" height="6.6" fill="#f4f4f4" stroke="#b5b5b5" stroke-width="0.9"/><path d="M1231 111.6 v-1.4 h7.4 v6.6 h-1.4" fill="none" stroke="#b5b5b5" stroke-width="0.9"/><path d="M1234.8 114.6 v8.4 l2 -1.8 l1.6 3.4 l1.4 -0.7 l-1.6 -3.3 h2.6z" fill="#fff" stroke="#222" stroke-width="0.9" stroke-linejoin="round"/><rect x="1255.6" y="63" width="6.6" height="5.4" fill="none" stroke="#b5b5b5" stroke-width="0.9"/><circle cx="1264" cy="70.6" r="2.6" fill="#f5f6f7" stroke="#9a9a9a" stroke-width="1"/><path d="M1264 65 v1.6 M1264 74.6 v1.8 M1258.2 70.6 h1.8 M1268 70.6 h1.8 M1260 66.6 l1.2 1.2 M1268 66.6 l-1.2 1.2 M1260 74.6 l1.2 -1.2 M1268 74.6 l-1.2 -1.2" stroke="#9a9a9a" stroke-width="0.9"/><path d="M1257.4 89.6 l9.6 9.8 M1267 89.6 l-9.6 9.8" stroke="#555" stroke-width="1.7"/><rect x="1257.7" y="121.6" width="1.9" height="1.4" fill="#222"/><rect x="1260.6" y="121.6" width="1.9" height="1.4" fill="#222"/><rect x="1263.5" y="121.6" width="1.9" height="1.4" fill="#222"/><path d="M1312 117.6 h5 l-2.5 2.8z" fill="#7a7a7a"/></svg>
<!-- right panel -->
<div class="b" style="left:1614px;top:154px;width:34px;height:27.6px;background:#f4f4f4;border:1px solid #c3c3c3;border-radius:3.5px;"></div>
<div class="b" style="left:1651px;top:154px;width:34px;height:27.6px;background:#f4f4f4;border:1px solid #c3c3c3;border-radius:3.5px;"></div>
<div class="b" style="left:1688px;top:154px;width:34px;height:27.6px;background:#f4f4f4;border:1px solid #c3c3c3;border-radius:3.5px;"></div>
<div class="b" style="left:1725px;top:154px;width:34px;height:27.6px;background:#f4f4f4;border:1px solid #c3c3c3;border-radius:3.5px;"></div>
<div class="b" style="left:1614px;top:184px;width:34px;height:27.6px;background:#f4f4f4;border:1px solid #c3c3c3;border-radius:3.5px;"></div>
<div class="b" style="left:1651px;top:184px;width:34px;height:27.6px;background:#f4f4f4;border:1px solid #c3c3c3;border-radius:3.5px;"></div>
<div class="b" style="left:1688px;top:184px;width:34px;height:27.6px;background:#f4f4f4;border:1px solid #c3c3c3;border-radius:3.5px;"></div>
<div class="b" style="left:1725px;top:184px;width:34px;height:27.6px;background:#f4f4f4;border:1px solid #c3c3c3;border-radius:3.5px;"></div>
<svg class="b" style="left:0px;top:0px;" width="1920" height="230" viewBox="0 0 1920 230"><ellipse cx="1631" cy="168" rx="6.6" ry="3.6" fill="none" stroke="#8e8e8e" stroke-width="1"/><circle cx="1631" cy="167.7" r="2.232" fill="#8e8e8e"/><circle cx="1631.3" cy="167.8" r="0.792" fill="#f3f3f3"/><path d="M1662.4 162 l11 12 M1673.4 162 l-11 12" stroke="#777" stroke-width="1.3"/><ellipse cx="1668" cy="168" rx="6.4" ry="3.4" fill="none" stroke="#cfcfcf" stroke-width="0.9"/><rect x="1697.6" y="162" width="14.6" height="12" fill="none" stroke="#777" stroke-width="1.5" stroke-dasharray="2.6 1.6"/><ellipse cx="1705" cy="168" rx="4.6" ry="2.5" fill="none" stroke="#8e8e8e" stroke-width="0.9"/><circle cx="1705" cy="167.7" r="1.55" fill="#8e8e8e"/><circle cx="1705.3" cy="167.8" r="0.55" fill="#f3f3f3"/><ellipse cx="1738.6" cy="162.6" rx="2.6" ry="1.4" fill="none" stroke="#8e8e8e" stroke-width="0.8"/><circle cx="1738.6" cy="162.3" r="0.868" fill="#8e8e8e"/><circle cx="1738.9" cy="162.4" r="0.308" fill="#f3f3f3"/><path d="M1743.4 160.4 l4.4 4.6 M1747.8 160.4 l-4.4 4.6" stroke="#888" stroke-width="0.9"/><path d="M1737.4 170.4 h6.4 q4.4 0.4 4.4 3.2 q0 2.6 -4.4 2.8" fill="none" stroke="#8a8a8a" stroke-width="1.8"/><path d="M1735 170.4 l4.4 -3.4 v6.8z" fill="#8a8a8a"/><ellipse cx="1631" cy="192.6" rx="4.6" ry="2.6" fill="none" stroke="#8e8e8e" stroke-width="0.9"/><circle cx="1631" cy="192.3" r="1.612" fill="#8e8e8e"/><circle cx="1631.3" cy="192.4" r="0.572" fill="#f3f3f3"/><path d="M1627.4 196.4 v10 M1627.4 199 h8.4 M1627.4 202.4 h8.4 M1627.4 205.8 h8.4" stroke="#8e8e8e" stroke-width="0.9" fill="none"/><path d="M1664.4 188.4 l7.4 8 M1671.8 188.4 l-7.4 8" stroke="#777" stroke-width="1.2"/><ellipse cx="1668" cy="192.6" rx="4.6" ry="2.6" fill="none" stroke="#c4c4c4" stroke-width="0.8"/><path d="M1664.4 197.4 v9 M1664.4 199.6 h8.4 M1664.4 202.8 h8.4 M1664.4 206 h8.4" stroke="#8e8e8e" stroke-width="0.9" fill="none"/><rect x="1698" y="193.6" width="4.6" height="3" fill="none" stroke="#8e8e8e" stroke-width="0.9"/><rect x="1704" y="198.6" width="4.6" height="3" fill="none" stroke="#8e8e8e" stroke-width="0.9"/><rect x="1704" y="203.4" width="4.6" height="3" fill="none" stroke="#8e8e8e" stroke-width="0.9"/><path d="M1700.4 196.6 v8.4 h3.6 M1700.4 200.2 h3.6" fill="none" stroke="#8e8e8e" stroke-width="0.9"/><circle cx="1707.4" cy="192.4" r="2.8" fill="none" stroke="#8e8e8e" stroke-width="0.9"/><path d="M1709.4 194.6 l3.4 3.6" stroke="#8e8e8e" stroke-width="1.1"/><rect x="1734" y="200.4" width="1.6" height="1.6" fill="#9a9a9a"/><rect x="1736.8" y="200.4" width="1.6" height="1.6" fill="#9a9a9a"/><rect x="1739.6" y="200.4" width="1.6" height="1.6" fill="#9a9a9a"/><path d="M1742.4 195.4 h8 l-4 3.8z" fill="#a8a8a8"/><defs><linearGradient id="lgsil" x1="0" x2="1" y1="0" y2="0"><stop offset="0" stop-color="#9d9d9d"/><stop offset="0.5" stop-color="#ececec"/><stop offset="1" stop-color="#a2a2a2"/></linearGradient><linearGradient id="lgorL" x1="0" x2="0" y1="0" y2="1"><stop offset="0" stop-color="#2a1000"/><stop offset="0.5" stop-color="#f27606"/><stop offset="1" stop-color="#7a3400"/></linearGradient><linearGradient id="lgorR" x1="0" x2="0" y1="0" y2="1"><stop offset="0" stop-color="#8a3c00"/><stop offset="0.45" stop-color="#f27606"/><stop offset="1" stop-color="#1a0800"/></linearGradient><linearGradient id="lgorM" x1="0" x2="0" y1="0" y2="1"><stop offset="0" stop-color="#b24f00"/><stop offset="0.5" stop-color="#f27a0a"/><stop offset="1" stop-color="#a84800"/></linearGradient></defs><rect x="1769" y="153" width="145" height="40" fill="url(#lgsil)"/><rect x="1769" y="153" width="145" height="40" fill="#888" opacity="0.18"/><path d="M1769 153 L1792 166 V184 L1769 185z" fill="url(#lgorL)"/><path d="M1769 153 L1780 159.4 L1769 164z" fill="#100500" opacity="0.75"/><rect x="1791" y="160" width="101" height="24.6" fill="#2b2f39"/><path d="M1791 165.4 L1842 169.4 L1892 161 V178 L1842 176.6 L1791 184z" fill="url(#lgorM)"/><path d="M1892 160 H1914 V193 L1892 178z" fill="url(#lgorR)"/><path d="M1914 193 L1903 185.6 L1914 181z" fill="#100500" opacity="0.7"/></svg>
<span class="t" style="left:1793.6px;top:159.4px;font-size:28.6px;line-height:30px;color:#30343e;font-weight:bold;transform-origin:0 50%;transform:scale(0.9224,1);">3D-Tool</span>
<span class="t" style="left:1791.8px;top:157.8px;font-size:28.6px;line-height:30px;color:#f4f4f4;font-weight:bold;transform-origin:0 50%;transform:scale(0.9224,1);">3D-Tool</span>
<span class="t" style="left:1810.8px;top:196.8px;font-size:11.5px;line-height:15.5px;color:#1a2040;letter-spacing:-0.192px;">www.3D-Tool.de</span>
<svg class="b" style="left:1772px;top:194px;" width="16" height="14" viewBox="0 0 16 14"><path d="M7.5 1.6 v11" stroke="#111" stroke-width="1.1"/><path d="M5.4 2.6 v5 l-3.4 -2.5z M9.6 2.6 v5 l3.4 -2.5z" fill="#111"/></svg>
<div class="b" style="left:1614px;top:214px;width:301px;height:615px;background:#fff;border:1px solid #868a90;"></div>
<div class="b" style="left:1616px;top:845px;width:299px;height:56px;border:1px solid #dcdcdc;border-radius:3px;"></div>
<div class="b" style="left:1618px;top:838px;width:72px;height:12px;background:#f0f0f0;"></div>
<span class="t" style="left:1620.6px;top:836.3px;font-size:11px;line-height:15px;color:#000;letter-spacing:-0.326px;">Custom Views</span>
<div class="b" style="left:1617px;top:850.5px;width:297px;height:18px;background:#fff;border:1px dotted #555;"></div>
<span class="t" style="left:1625.0px;top:852.5px;font-size:11px;line-height:15px;color:#000;letter-spacing:-0.151px;">No views available</span>
<svg class="b" style="left:1901px;top:858px;" width="8" height="5" viewBox="0 0 8 5"><path d="M0 0 h7.4 l-3.7 4.2z" fill="#111"/></svg>
<div class="b" style="left:1618px;top:872.5px;width:34px;height:27.5px;background:linear-gradient(to bottom,#f3f3f3 0%,#ebebeb 48%,#dddddd 52%,#d0d0d0 100%);border-radius:3px;box-shadow:inset 0 0 0 1px rgba(255,255,255,.7);border:1px solid #8c8c8c;"></div>
<div class="b" style="left:1655px;top:872.5px;width:34px;height:27.5px;background:linear-gradient(to bottom,#f3f3f3 0%,#ebebeb 48%,#dddddd 52%,#d0d0d0 100%);border-radius:3px;box-shadow:inset 0 0 0 1px rgba(255,255,255,.7);border:1px solid #8c8c8c;"></div>
<div class="b" style="left:1691.5px;top:872.5px;width:34px;height:27.5px;background:linear-gradient(to bottom,#f3f3f3 0%,#ebebeb 48%,#dddddd 52%,#d0d0d0 100%);border-radius:3px;box-shadow:inset 0 0 0 1px rgba(255,255,255,.7);border:1px solid #8c8c8c;"></div>
<div class="b" style="left:1842.5px;top:872.5px;width:34px;height:27.5px;background:linear-gradient(to bottom,#f3f3f3 0%,#ebebeb 48%,#dddddd 52%,#d0d0d0 100%);border-radius:3px;box-shadow:inset 0 0 0 1px rgba(255,255,255,.7);border:1px solid #8c8c8c;"></div>
<div class="b" style="left:1879.5px;top:872.5px;width:34px;height:27.5px;background:linear-gradient(to bottom,#f3f3f3 0%,#ebebeb 48%,#dddddd 52%,#d0d0d0 100%);border-radius:3px;box-shadow:inset 0 0 0 1px rgba(255,255,255,.7);border:1px solid #c8c8c8;opacity:.75;"></div>
<span class="t" style="left:1672.0px;transform:translateX(-50%);top:877.0px;font-size:14px;line-height:18px;color:#111;">&lt;</span>
<span class="t" style="left:1708.6px;transform:translateX(-50%);top:877.0px;font-size:14px;line-height:18px;color:#111;">&gt;</span>
<div class="b" style="left:1614px;top:916px;width:301px;height:74px;border:1px solid #dcdcdc;border-radius:3px;"></div>
<div class="b" style="left:1616px;top:909px;width:110px;height:12px;background:#f0f0f0;"></div>
<span class="t" style="left:1619.4px;top:907.7px;font-size:11px;line-height:15px;color:#000;letter-spacing:-0.153px;">Lighting / Background</span>
<span class="t" style="left:1640.4px;top:923.7px;font-size:11px;line-height:15px;color:#000;letter-spacing:0.077px;">Default</span>
<span class="t" style="left:1806.8px;transform:translateX(-50%);top:938.7px;font-size:11px;line-height:15px;color:#000;">White</span>
<span class="t" style="left:1806.8px;transform:translateX(-50%);top:971.7px;font-size:11px;line-height:15px;color:#000;">Normal</span>
<div class="b" style="left:1615.5px;top:996.5px;width:276.5px;height:15px;background:linear-gradient(to bottom,#f2f2f2 0%,#dcdcdc 45%,#cfcfcf 55%,#e4e4e4 100%);border:1px solid #b4b4b4;border-radius:3px;"></div>
<svg class="b" style="left:0px;top:0px;" width="1920" height="1039" viewBox="0 0 1920 1039"><path d="M1627.6 888.6 L1635 881 L1642.4 888.6" fill="none" stroke="#e0452a" stroke-width="1.7"/><path d="M1630 888 L1635 883 L1640 888 V894 H1636.6 V890 H1633.4 V894 H1630z" fill="#3f7fd0"/><rect x="1629" y="884" width="1.8" height="3" fill="#3f7fd0"/><circle cx="1637.6" cy="879.6" r="1.5" fill="none" stroke="#111" stroke-width="0.9"/><circle cx="1641" cy="879.6" r="1.5" fill="none" stroke="#111" stroke-width="0.9"/><path d="M1854.4 886.4 h8 l1.4 1.4 v6.6 h-9.4z" fill="#3f6fb8"/><rect x="1856.4" y="886.4" width="4.4" height="2.6" fill="#e6eefa"/><rect x="1856.2" y="890.6" width="5.6" height="3.8" fill="#e6eefa"/><circle cx="1861.4" cy="880.6" r="1.5" fill="none" stroke="#111" stroke-width="0.9"/><circle cx="1864.8" cy="880.6" r="1.5" fill="none" stroke="#111" stroke-width="0.9"/><path d="M1892 888.4 h6 q4 0.4 4 3 q0 2.4 -4 2.6 h-4" fill="none" stroke="#b4b4b4" stroke-width="1.9"/><path d="M1889 888.4 l4.6 -3.6 v7.2z" fill="#b4b4b4"/><circle cx="1898.4" cy="880.6" r="1.5" fill="none" stroke="#9a9a9a" stroke-width="0.9"/><circle cx="1901.8" cy="880.6" r="1.5" fill="none" stroke="#9a9a9a" stroke-width="0.9"/><circle cx="1630.8" cy="931" r="5.4" fill="#fff" stroke="#7c8a99" stroke-width="1"/><circle cx="1630.8" cy="931" r="3.1" fill="#1f5f9f"/><circle cx="1630" cy="930.2" r="1.3" fill="#5fb0e8"/><defs><clipPath id="sphc"><circle cx="1655.3" cy="963.6" r="19.5"/></clipPath></defs><circle cx="1655.3" cy="963.6" r="19.5" fill="#868686"/><g clip-path="url(#sphc)"><ellipse cx="1655.3" cy="963.6" rx="7.6" ry="19.6" fill="none" stroke="#ececec" stroke-width="0.95"/><ellipse cx="1655.3" cy="963.6" rx="15" ry="19.6" fill="none" stroke="#ececec" stroke-width="0.95"/><ellipse cx="1655.3" cy="963.6" rx="19.6" ry="7.6" fill="none" stroke="#ececec" stroke-width="0.95"/><ellipse cx="1655.3" cy="963.6" rx="19.6" ry="15" fill="none" stroke="#ececec" stroke-width="0.95"/><path d="M1655.3 943 v41 M1635 963.6 h41" stroke="#ececec" stroke-width="0.95"/></g><circle cx="1657.6" cy="961.9" r="4.7" fill="#f8f400"/><path d="M1698.4 923 v63.6" stroke="#a8a8a8" stroke-width="1"/><rect x="1800.5" y="925.5" width="13" height="13" fill="#fff" stroke="#333" stroke-width="1"/><defs><linearGradient id="nrm" x1="0" x2="0" y1="0" y2="1"><stop offset="0" stop-color="#f4f4f4"/><stop offset="1" stop-color="#9a9a9a"/></linearGradient></defs><rect x="1800.5" y="958.5" width="13" height="13" fill="url(#nrm)" stroke="#333" stroke-width="1"/><circle cx="1904.4" cy="1003.6" r="7.3" fill="#087a08"/><path d="M1843.2 1026.4 L1839.6 1029.6" stroke="#4a78b0" stroke-width="2.2"/><circle cx="1845.6" cy="1023.8" r="3.3" fill="#f2ece6" stroke="#666" stroke-width="1"/><path d="M1836.2 1018.2 h4 l-4 3.8z M1852 1018.2 v3.8 l-4 -3.8z M1836.2 1033 v-3.8 l4 3.8z M1852 1033 h-4 l4 -3.8z" fill="#4a78b0"/><path d="M1872.9 1027.4 L1867.7 1032.6" stroke="#4a78b0" stroke-width="2.8"/><circle cx="1875.5" cy="1024.4" r="3.9" fill="#f6f6fa" stroke="#666" stroke-width="1"/><path d="M1873.3 1024.4 h4.4" stroke="#666" stroke-width="1"/><path d="M1902.9 1027.4 L1897.7 1032.6" stroke="#4a78b0" stroke-width="2.8"/><circle cx="1905.5" cy="1024.4" r="3.9" fill="#f6f6fa" stroke="#666" stroke-width="1"/><path d="M1903.3 1024.4 h4.4 M1905.5 1022.2 v4.4" stroke="#444" stroke-width="0.9"/></svg>
<div class="b" style="left:1918px;top:150px;width:1px;height:866px;background:#cfcfcf;"></div>
<!-- dialogs -->
<div class="b" style="left:372px;top:237px;width:308px;height:294px;background:#f0f0f0;border:1px solid #46505c;border-radius:6px 6px 2px 2px;box-shadow:0 0 0 1px rgba(255,255,255,.55) inset;"></div>
<div class="b" style="left:373px;top:238px;width:306px;height:25px;background:linear-gradient(to bottom,#aec4dc 0%,#c9d9ec 50%,#dbe6f3 100%);border-radius:5px 5px 0 0;"></div>
<span class="t" style="left:379.6px;top:242.3px;font-size:13px;line-height:17px;color:#4c5c6e;letter-spacing:0.146px;">Background Color</span>
<div class="b" style="left:375px;top:262px;width:301px;height:24px;background:linear-gradient(to bottom,#e9e9e9,#dedede);border:1px solid #9a9a9a;border-top-color:#b8b8b8;"></div>
<span class="t" style="left:385.5px;top:266.8px;font-size:11px;line-height:15px;color:#000;letter-spacing:-0.212px;">Change background color</span>
<div class="b" style="left:433px;top:302px;width:185px;height:4px;background:#e7eaea;border:1px solid #b0b4b8;border-bottom-color:#e8e8e8;border-right-color:#e8e8e8;border-radius:1px;"></div>
<svg class="b" style="left:0px;top:0px;" width="700" height="330" viewBox="0 0 700 330"><rect x="437.2" y="314.6" width="1" height="3.6" fill="#c2c2c2"/><rect x="454.9" y="314.6" width="1" height="3.6" fill="#c2c2c2"/><rect x="472.6" y="314.6" width="1" height="3.6" fill="#c2c2c2"/><rect x="490.4" y="314.6" width="1" height="3.6" fill="#c2c2c2"/><rect x="508.1" y="314.6" width="1" height="3.6" fill="#c2c2c2"/><rect x="525.8" y="314.6" width="1" height="3.6" fill="#c2c2c2"/><rect x="543.5" y="314.6" width="1" height="3.6" fill="#c2c2c2"/><rect x="561.2" y="314.6" width="1" height="3.6" fill="#c2c2c2"/><rect x="579.0" y="314.6" width="1" height="3.6" fill="#c2c2c2"/><rect x="596.7" y="314.6" width="1" height="3.6" fill="#c2c2c2"/><rect x="614.4" y="314.6" width="1" height="3.6" fill="#c2c2c2"/></svg>
<svg class="b" style="left:544px;top:296.5px;" width="9" height="15" viewBox="0 0 9 15"><path d="M0.6 1.6 q0 -1 1 -1 h5 q1 0 1 1 v8.2 l-3.5 4 l-3.5 -4z" fill="#ececec" stroke="#7a7a7a" stroke-width="1"/><path d="M1.8 2 h4.4" stroke="#fff" stroke-width="1"/></svg>
<span class="t" style="left:423.2px;top:322.7px;font-size:11px;line-height:15px;color:#000;letter-spacing:-0.134px;">Dark</span>
<span class="t" style="left:481.7px;top:322.7px;font-size:11px;line-height:15px;color:#000;letter-spacing:-0.018px;">Top color intensity</span>
<span class="t" style="left:605.2px;top:322.7px;font-size:11px;line-height:15px;color:#000;letter-spacing:-0.012px;">Light</span>
<div class="b" style="left:391px;top:344.5px;width:13px;height:12.6px;background:linear-gradient(135deg,#dfe3e6,#fdfdfd);border:1px solid #8e8f8f;box-shadow:inset 0 0 0 1px #f4f4f4, inset 0 0 0 2px #c8ccd0;"></div>
<svg class="b" style="left:391.2px;top:345px;" width="12" height="12" viewBox="0 0 12 12"><path d="M2.8 5.6 L5 9 L9.4 2.6" fill="none" stroke="#3a4f94" stroke-width="1.7"/></svg>
<span class="t" style="left:406.8px;top:343.5px;font-size:11px;line-height:15px;color:#000;letter-spacing:-0.181px;">Gradient background</span>
<div class="b" style="left:390.7px;top:372px;width:150.3px;height:110px;background:linear-gradient(to bottom,#e2e2e2,#8c8c8c);"></div>
<div class="b" style="left:571px;top:373.2px;width:88px;height:22.3px;background:linear-gradient(to bottom,#f2f2f2 0%,#ebebeb 48%,#dddddd 52%,#cfcfcf 100%);border:1px solid #707070;box-shadow:inset 0 0 0 1px rgba(255,255,255,.85);border-radius:3px;"></div><span class="t" style="left:580.5px;top:377.5px;font-size:11px;line-height:15px;color:#000;letter-spacing:0.123px;">Set as default</span>
<div class="b" style="left:571px;top:429.2px;width:88px;height:22.3px;background:linear-gradient(to bottom,#eaf6fd 0%,#d9f0fc 48%,#bee6fd 52%,#a7d9f5 100%);border:1px solid #3c7fb1;box-shadow:inset 0 0 0 1px #48d8fb;border-radius:3px;"></div><span class="t" style="left:583.5px;top:433.5px;font-size:11px;line-height:15px;color:#000;letter-spacing:-0.203px;">Change color</span>
<div class="b" style="left:571px;top:458.2px;width:88px;height:22.3px;background:linear-gradient(to bottom,#f2f2f2 0%,#ebebeb 48%,#dddddd 52%,#cfcfcf 100%);border:1px solid #707070;box-shadow:inset 0 0 0 1px rgba(255,255,255,.85);border-radius:3px;"></div><span class="t" style="left:579.5px;top:462.5px;font-size:11px;line-height:15px;color:#000;letter-spacing:-0.042px;">Update screen</span>
<div class="b" style="left:449px;top:495.5px;width:73px;height:22px;background:linear-gradient(to bottom,#f2f2f2 0%,#ebebeb 48%,#dddddd 52%,#cfcfcf 100%);border:1px solid #707070;box-shadow:inset 0 0 0 1px rgba(255,255,255,.85);border-radius:3px;"></div><span class="t" style="left:478.0px;top:499.7px;font-size:11px;line-height:15px;color:#000;letter-spacing:-0.453px;">OK</span>
<div class="b" style="left:530px;top:495.5px;width:73px;height:22px;background:linear-gradient(to bottom,#f2f2f2 0%,#ebebeb 48%,#dddddd 52%,#cfcfcf 100%);border:1px solid #707070;box-shadow:inset 0 0 0 1px rgba(255,255,255,.85);border-radius:3px;"></div><span class="t" style="left:550.0px;top:499.7px;font-size:11px;line-height:15px;color:#000;letter-spacing:-0.208px;">Cancel</span>
<div class="b" style="left:688px;top:239px;width:480px;height:306px;background:#f0f0f0;border:1px solid #3c4856;border-radius:6px 6px 2px 2px;"></div>
<div class="b" style="left:689px;top:240px;width:478px;height:304px;border:1px solid rgba(255,255,255,.55);border-bottom-color:#8fd0f5;border-left-color:#d4e6f5;border-right-color:#cfe4f5;border-radius:5px 5px 1px 1px;background:linear-gradient(to bottom,#9cb6d5 0,#adc6e1 12px,#bbd1e9 24px,#c6dcf0 80%,#9fd2f3 100%);"></div>
<div class="b" style="left:690px;top:264px;width:476px;height:278.6px;background:#f0f0f0;"></div>
<span class="t" style="left:695.0px;top:244.1px;font-size:13px;line-height:17px;color:#1e1e1e;letter-spacing:0.184px;">Color</span>
<div class="b" style="left:1132px;top:244px;width:31px;height:17px;background:linear-gradient(to bottom,#e8a898 0%,#d9705c 45%,#c8402a 50%,#d06048 100%);border:1px solid #5a2a2a;border-radius:3px;box-shadow:inset 0 0 0 1px rgba(255,255,255,.45);"></div>
<svg class="b" style="left:1141px;top:247.5px;" width="13" height="10" viewBox="0 0 13 10"><path d="M2.6 1.6 L10.4 8.4 M10.4 1.6 L2.6 8.4" stroke="#4a3a3a" stroke-width="3.4" stroke-linecap="square"/><path d="M2.6 1.6 L10.4 8.4 M10.4 1.6 L2.6 8.4" stroke="#fff" stroke-width="1.9" stroke-linecap="square"/></svg>
<span class="t" style="left:696.6px;top:268.4px;font-size:12px;line-height:16px;color:#000;font-family:'Liberation Serif', serif;letter-spacing:1.098px;">Basic colors:</span>
<svg class="b" style="left:0px;top:0px;" width="1200" height="560" viewBox="0 0 1200 560"><rect x="701.5" y="288.4" width="17" height="13" fill="#ff8080"/><path d="M702 301.4 v-13 h17" fill="none" stroke="#8a8a8a" stroke-width="1"/><path d="M702 300.9 h16 v-12" fill="none" stroke="#fafafa" stroke-width="1"/><path d="M703 300.4 v-11 h15" fill="none" stroke="#555" stroke-width="1" opacity="0.55"/><rect x="727.5" y="288.4" width="17" height="13" fill="#ffff80"/><path d="M728 301.4 v-13 h17" fill="none" stroke="#8a8a8a" stroke-width="1"/><path d="M728 300.9 h16 v-12" fill="none" stroke="#fafafa" stroke-width="1"/><path d="M729 300.4 v-11 h15" fill="none" stroke="#555" stroke-width="1" opacity="0.55"/><rect x="753.5" y="288.4" width="17" height="13" fill="#80ff80"/><path d="M754 301.4 v-13 h17" fill="none" stroke="#8a8a8a" stroke-width="1"/><path d="M754 300.9 h16 v-12" fill="none" stroke="#fafafa" stroke-width="1"/><path d="M755 300.4 v-11 h15" fill="none" stroke="#555" stroke-width="1" opacity="0.55"/><rect x="779.5" y="288.4" width="17" height="13" fill="#00ff80"/><path d="M780 301.4 v-13 h17" fill="none" stroke="#8a8a8a" stroke-width="1"/><path d="M780 300.9 h16 v-12" fill="none" stroke="#fafafa" stroke-width="1"/><path d="M781 300.4 v-11 h15" fill="none" stroke="#555" stroke-width="1" opacity="0.55"/><rect x="805.5" y="288.4" width="17" height="13" fill="#80ffff"/><path d="M806 301.4 v-13 h17" fill="none" stroke="#8a8a8a" stroke-width="1"/><path d="M806 300.9 h16 v-12" fill="none" stroke="#fafafa" stroke-width="1"/><path d="M807 300.4 v-11 h15" fill="none" stroke="#555" stroke-width="1" opacity="0.55"/><rect x="831.5" y="288.4" width="17" height="13" fill="#0080ff"/><path d="M832 301.4 v-13 h17" fill="none" stroke="#8a8a8a" stroke-width="1"/><path d="M832 300.9 h16 v-12" fill="none" stroke="#fafafa" stroke-width="1"/><path d="M833 300.4 v-11 h15" fill="none" stroke="#555" stroke-width="1" opacity="0.55"/><rect x="857.5" y="288.4" width="17" height="13" fill="#ff80c0"/><path d="M858 301.4 v-13 h17" fill="none" stroke="#8a8a8a" stroke-width="1"/><path d="M858 300.9 h16 v-12" fill="none" stroke="#fafafa" stroke-width="1"/><path d="M859 300.4 v-11 h15" fill="none" stroke="#555" stroke-width="1" opacity="0.55"/><rect x="883.5" y="288.4" width="17" height="13" fill="#ff80ff"/><path d="M884 301.4 v-13 h17" fill="none" stroke="#8a8a8a" stroke-width="1"/><path d="M884 300.9 h16 v-12" fill="none" stroke="#fafafa" stroke-width="1"/><path d="M885 300.4 v-11 h15" fill="none" stroke="#555" stroke-width="1" opacity="0.55"/><rect x="701.5" y="308.4" width="17" height="13" fill="#ff0000"/><path d="M702 321.4 v-13 h17" fill="none" stroke="#8a8a8a" stroke-width="1"/><path d="M702 320.9 h16 v-12" fill="none" stroke="#fafafa" stroke-width="1"/><path d="M703 320.4 v-11 h15" fill="none" stroke="#555" stroke-width="1" opacity="0.55"/><rect x="727.5" y="308.4" width="17" height="13" fill="#ffff00"/><path d="M728 321.4 v-13 h17" fill="none" stroke="#8a8a8a" stroke-width="1"/><path d="M728 320.9 h16 v-12" fill="none" stroke="#fafafa" stroke-width="1"/><path d="M729 320.4 v-11 h15" fill="none" stroke="#555" stroke-width="1" opacity="0.55"/><rect x="753.5" y="308.4" width="17" height="13" fill="#80ff00"/><path d="M754 321.4 v-13 h17" fill="none" stroke="#8a8a8a" stroke-width="1"/><path d="M754 320.9 h16 v-12" fill="none" stroke="#fafafa" stroke-width="1"/><path d="M755 320.4 v-11 h15" fill="none" stroke="#555" stroke-width="1" opacity="0.55"/><rect x="779.5" y="308.4" width="17" height="13" fill="#00ff40"/><path d="M780 321.4 v-13 h17" fill="none" stroke="#8a8a8a" stroke-width="1"/><path d="M780 320.9 h16 v-12" fill="none" stroke="#fafafa" stroke-width="1"/><path d="M781 320.4 v-11 h15" fill="none" stroke="#555" stroke-width="1" opacity="0.55"/><rect x="805.5" y="308.4" width="17" height="13" fill="#00ffff"/><path d="M806 321.4 v-13 h17" fill="none" stroke="#8a8a8a" stroke-width="1"/><path d="M806 320.9 h16 v-12" fill="none" stroke="#fafafa" stroke-width="1"/><path d="M807 320.4 v-11 h15" fill="none" stroke="#555" stroke-width="1" opacity="0.55"/><rect x="831.5" y="308.4" width="17" height="13" fill="#0080c0"/><path d="M832 321.4 v-13 h17" fill="none" stroke="#8a8a8a" stroke-width="1"/><path d="M832 320.9 h16 v-12" fill="none" stroke="#fafafa" stroke-width="1"/><path d="M833 320.4 v-11 h15" fill="none" stroke="#555" stroke-width="1" opacity="0.55"/><rect x="857.5" y="308.4" width="17" height="13" fill="#8080c0"/><path d="M858 321.4 v-13 h17" fill="none" stroke="#8a8a8a" stroke-width="1"/><path d="M858 320.9 h16 v-12" fill="none" stroke="#fafafa" stroke-width="1"/><path d="M859 320.4 v-11 h15" fill="none" stroke="#555" stroke-width="1" opacity="0.55"/><rect x="883.5" y="308.4" width="17" height="13" fill="#ff00ff"/><path d="M884 321.4 v-13 h17" fill="none" stroke="#8a8a8a" stroke-width="1"/><path d="M884 320.9 h16 v-12" fill="none" stroke="#fafafa" stroke-width="1"/><path d="M885 320.4 v-11 h15" fill="none" stroke="#555" stroke-width="1" opacity="0.55"/><rect x="701.5" y="328.4" width="17" height="13" fill="#804040"/><path d="M702 341.4 v-13 h17" fill="none" stroke="#8a8a8a" stroke-width="1"/><path d="M702 340.9 h16 v-12" fill="none" stroke="#fafafa" stroke-width="1"/><path d="M703 340.4 v-11 h15" fill="none" stroke="#555" stroke-width="1" opacity="0.55"/><rect x="727.5" y="328.4" width="17" height="13" fill="#ff8040"/><path d="M728 341.4 v-13 h17" fill="none" stroke="#8a8a8a" stroke-width="1"/><path d="M728 340.9 h16 v-12" fill="none" stroke="#fafafa" stroke-width="1"/><path d="M729 340.4 v-11 h15" fill="none" stroke="#555" stroke-width="1" opacity="0.55"/><rect x="753.5" y="328.4" width="17" height="13" fill="#00ff00"/><path d="M754 341.4 v-13 h17" fill="none" stroke="#8a8a8a" stroke-width="1"/><path d="M754 340.9 h16 v-12" fill="none" stroke="#fafafa" stroke-width="1"/><path d="M755 340.4 v-11 h15" fill="none" stroke="#555" stroke-width="1" opacity="0.55"/><rect x="779.5" y="328.4" width="17" height="13" fill="#008080"/><path d="M780 341.4 v-13 h17" fill="none" stroke="#8a8a8a" stroke-width="1"/><path d="M780 340.9 h16 v-12" fill="none" stroke="#fafafa" stroke-width="1"/><path d="M781 340.4 v-11 h15" fill="none" stroke="#555" stroke-width="1" opacity="0.55"/><rect x="805.5" y="328.4" width="17" height="13" fill="#004080"/><path d="M806 341.4 v-13 h17" fill="none" stroke="#8a8a8a" stroke-width="1"/><path d="M806 340.9 h16 v-12" fill="none" stroke="#fafafa" stroke-width="1"/><path d="M807 340.4 v-11 h15" fill="none" stroke="#555" stroke-width="1" opacity="0.55"/><rect x="831.5" y="328.4" width="17" height="13" fill="#8080ff"/><path d="M832 341.4 v-13 h17" fill="none" stroke="#8a8a8a" stroke-width="1"/><path d="M832 340.9 h16 v-12" fill="none" stroke="#fafafa" stroke-width="1"/><path d="M833 340.4 v-11 h15" fill="none" stroke="#555" stroke-width="1" opacity="0.55"/><rect x="857.5" y="328.4" width="17" height="13" fill="#800040"/><path d="M858 341.4 v-13 h17" fill="none" stroke="#8a8a8a" stroke-width="1"/><path d="M858 340.9 h16 v-12" fill="none" stroke="#fafafa" stroke-width="1"/><path d="M859 340.4 v-11 h15" fill="none" stroke="#555" stroke-width="1" opacity="0.55"/><rect x="883.5" y="328.4" width="17" height="13" fill="#ff0080"/><path d="M884 341.4 v-13 h17" fill="none" stroke="#8a8a8a" stroke-width="1"/><path d="M884 340.9 h16 v-12" fill="none" stroke="#fafafa" stroke-width="1"/><path d="M885 340.4 v-11 h15" fill="none" stroke="#555" stroke-width="1" opacity="0.55"/><rect x="701.5" y="348.4" width="17" height="13" fill="#800000"/><path d="M702 361.4 v-13 h17" fill="none" stroke="#8a8a8a" stroke-width="1"/><path d="M702 360.9 h16 v-12" fill="none" stroke="#fafafa" stroke-width="1"/><path d="M703 360.4 v-11 h15" fill="none" stroke="#555" stroke-width="1" opacity="0.55"/><rect x="727.5" y="348.4" width="17" height="13" fill="#ff8000"/><path d="M728 361.4 v-13 h17" fill="none" stroke="#8a8a8a" stroke-width="1"/><path d="M728 360.9 h16 v-12" fill="none" stroke="#fafafa" stroke-width="1"/><path d="M729 360.4 v-11 h15" fill="none" stroke="#555" stroke-width="1" opacity="0.55"/><rect x="753.5" y="348.4" width="17" height="13" fill="#008000"/><path d="M754 361.4 v-13 h17" fill="none" stroke="#8a8a8a" stroke-width="1"/><path d="M754 360.9 h16 v-12" fill="none" stroke="#fafafa" stroke-width="1"/><path d="M755 360.4 v-11 h15" fill="none" stroke="#555" stroke-width="1" opacity="0.55"/><rect x="779.5" y="348.4" width="17" height="13" fill="#008040"/><path d="M780 361.4 v-13 h17" fill="none" stroke="#8a8a8a" stroke-width="1"/><path d="M780 360.9 h16 v-12" fill="none" stroke="#fafafa" stroke-width="1"/><path d="M781 360.4 v-11 h15" fill="none" stroke="#555" stroke-width="1" opacity="0.55"/><rect x="805.5" y="348.4" width="17" height="13" fill="#0000ff"/><path d="M806 361.4 v-13 h17" fill="none" stroke="#8a8a8a" stroke-width="1"/><path d="M806 360.9 h16 v-12" fill="none" stroke="#fafafa" stroke-width="1"/><path d="M807 360.4 v-11 h15" fill="none" stroke="#555" stroke-width="1" opacity="0.55"/><rect x="831.5" y="348.4" width="17" height="13" fill="#0000a0"/><path d="M832 361.4 v-13 h17" fill="none" stroke="#8a8a8a" stroke-width="1"/><path d="M832 360.9 h16 v-12" fill="none" stroke="#fafafa" stroke-width="1"/><path d="M833 360.4 v-11 h15" fill="none" stroke="#555" stroke-width="1" opacity="0.55"/><rect x="857.5" y="348.4" width="17" height="13" fill="#800080"/><path d="M858 361.4 v-13 h17" fill="none" stroke="#8a8a8a" stroke-width="1"/><path d="M858 360.9 h16 v-12" fill="none" stroke="#fafafa" stroke-width="1"/><path d="M859 360.4 v-11 h15" fill="none" stroke="#555" stroke-width="1" opacity="0.55"/><rect x="883.5" y="348.4" width="17" height="13" fill="#8000ff"/><path d="M884 361.4 v-13 h17" fill="none" stroke="#8a8a8a" stroke-width="1"/><path d="M884 360.9 h16 v-12" fill="none" stroke="#fafafa" stroke-width="1"/><path d="M885 360.4 v-11 h15" fill="none" stroke="#555" stroke-width="1" opacity="0.55"/><rect x="701.5" y="368.4" width="17" height="13" fill="#400000"/><path d="M702 381.4 v-13 h17" fill="none" stroke="#8a8a8a" stroke-width="1"/><path d="M702 380.9 h16 v-12" fill="none" stroke="#fafafa" stroke-width="1"/><path d="M703 380.4 v-11 h15" fill="none" stroke="#555" stroke-width="1" opacity="0.55"/><rect x="727.5" y="368.4" width="17" height="13" fill="#804000"/><path d="M728 381.4 v-13 h17" fill="none" stroke="#8a8a8a" stroke-width="1"/><path d="M728 380.9 h16 v-12" fill="none" stroke="#fafafa" stroke-width="1"/><path d="M729 380.4 v-11 h15" fill="none" stroke="#555" stroke-width="1" opacity="0.55"/><rect x="753.5" y="368.4" width="17" height="13" fill="#004000"/><path d="M754 381.4 v-13 h17" fill="none" stroke="#8a8a8a" stroke-width="1"/><path d="M754 380.9 h16 v-12" fill="none" stroke="#fafafa" stroke-width="1"/><path d="M755 380.4 v-11 h15" fill="none" stroke="#555" stroke-width="1" opacity="0.55"/><rect x="779.5" y="368.4" width="17" height="13" fill="#004040"/><path d="M780 381.4 v-13 h17" fill="none" stroke="#8a8a8a" stroke-width="1"/><path d="M780 380.9 h16 v-12" fill="none" stroke="#fafafa" stroke-width="1"/><path d="M781 380.4 v-11 h15" fill="none" stroke="#555" stroke-width="1" opacity="0.55"/><rect x="805.5" y="368.4" width="17" height="13" fill="#000080"/><path d="M806 381.4 v-13 h17" fill="none" stroke="#8a8a8a" stroke-width="1"/><path d="M806 380.9 h16 v-12" fill="none" stroke="#fafafa" stroke-width="1"/><path d="M807 380.4 v-11 h15" fill="none" stroke="#555" stroke-width="1" opacity="0.55"/><rect x="831.5" y="368.4" width="17" height="13" fill="#000040"/><path d="M832 381.4 v-13 h17" fill="none" stroke="#8a8a8a" stroke-width="1"/><path d="M832 380.9 h16 v-12" fill="none" stroke="#fafafa" stroke-width="1"/><path d="M833 380.4 v-11 h15" fill="none" stroke="#555" stroke-width="1" opacity="0.55"/><rect x="857.5" y="368.4" width="17" height="13" fill="#400040"/><path d="M858 381.4 v-13 h17" fill="none" stroke="#8a8a8a" stroke-width="1"/><path d="M858 380.9 h16 v-12" fill="none" stroke="#fafafa" stroke-width="1"/><path d="M859 380.4 v-11 h15" fill="none" stroke="#555" stroke-width="1" opacity="0.55"/><rect x="883.5" y="368.4" width="17" height="13" fill="#400080"/><path d="M884 381.4 v-13 h17" fill="none" stroke="#8a8a8a" stroke-width="1"/><path d="M884 380.9 h16 v-12" fill="none" stroke="#fafafa" stroke-width="1"/><path d="M885 380.4 v-11 h15" fill="none" stroke="#555" stroke-width="1" opacity="0.55"/><rect x="701.5" y="388.4" width="17" height="13" fill="#000000"/><path d="M702 401.4 v-13 h17" fill="none" stroke="#8a8a8a" stroke-width="1"/><path d="M702 400.9 h16 v-12" fill="none" stroke="#fafafa" stroke-width="1"/><path d="M703 400.4 v-11 h15" fill="none" stroke="#555" stroke-width="1" opacity="0.55"/><rect x="727.5" y="388.4" width="17" height="13" fill="#808000"/><path d="M728 401.4 v-13 h17" fill="none" stroke="#8a8a8a" stroke-width="1"/><path d="M728 400.9 h16 v-12" fill="none" stroke="#fafafa" stroke-width="1"/><path d="M729 400.4 v-11 h15" fill="none" stroke="#555" stroke-width="1" opacity="0.55"/><rect x="753.5" y="388.4" width="17" height="13" fill="#808040"/><path d="M754 401.4 v-13 h17" fill="none" stroke="#8a8a8a" stroke-width="1"/><path d="M754 400.9 h16 v-12" fill="none" stroke="#fafafa" stroke-width="1"/><path d="M755 400.4 v-11 h15" fill="none" stroke="#555" stroke-width="1" opacity="0.55"/><rect x="779.5" y="388.4" width="17" height="13" fill="#808080"/><path d="M780 401.4 v-13 h17" fill="none" stroke="#8a8a8a" stroke-width="1"/><path d="M780 400.9 h16 v-12" fill="none" stroke="#fafafa" stroke-width="1"/><path d="M781 400.4 v-11 h15" fill="none" stroke="#555" stroke-width="1" opacity="0.55"/><rect x="805.5" y="388.4" width="17" height="13" fill="#408080"/><path d="M806 401.4 v-13 h17" fill="none" stroke="#8a8a8a" stroke-width="1"/><path d="M806 400.9 h16 v-12" fill="none" stroke="#fafafa" stroke-width="1"/><path d="M807 400.4 v-11 h15" fill="none" stroke="#555" stroke-width="1" opacity="0.55"/><rect x="831.5" y="388.4" width="17" height="13" fill="#c0c0c0"/><path d="M832 401.4 v-13 h17" fill="none" stroke="#8a8a8a" stroke-width="1"/><path d="M832 400.9 h16 v-12" fill="none" stroke="#fafafa" stroke-width="1"/><path d="M833 400.4 v-11 h15" fill="none" stroke="#555" stroke-width="1" opacity="0.55"/><rect x="857.5" y="388.4" width="17" height="13" fill="#400040"/><path d="M858 401.4 v-13 h17" fill="none" stroke="#8a8a8a" stroke-width="1"/><path d="M858 400.9 h16 v-12" fill="none" stroke="#fafafa" stroke-width="1"/><path d="M859 400.4 v-11 h15" fill="none" stroke="#555" stroke-width="1" opacity="0.55"/><rect x="883.5" y="388.4" width="17" height="13" fill="#ffffff"/><path d="M884 401.4 v-13 h17" fill="none" stroke="#8a8a8a" stroke-width="1"/><path d="M884 400.9 h16 v-12" fill="none" stroke="#fafafa" stroke-width="1"/><path d="M885 400.4 v-11 h15" fill="none" stroke="#555" stroke-width="1" opacity="0.55"/><rect x="829.5" y="386.4" width="21" height="17" fill="none" stroke="#111" stroke-width="1"/><rect x="827.5" y="384.4" width="25" height="21" fill="none" stroke="#111" stroke-width="1" stroke-dasharray="1 1" shape-rendering="crispEdges"/><rect x="701.5" y="442" width="17" height="13" fill="#000"/><path d="M702 454.5 h16 v-12" fill="none" stroke="#fafafa" stroke-width="1"/><path d="M702 455 v-13 h17" fill="none" stroke="#8a8a8a" stroke-width="1"/><rect x="727.5" y="442" width="17" height="13" fill="#000"/><path d="M728 454.5 h16 v-12" fill="none" stroke="#fafafa" stroke-width="1"/><path d="M728 455 v-13 h17" fill="none" stroke="#8a8a8a" stroke-width="1"/><rect x="753.5" y="442" width="17" height="13" fill="#000"/><path d="M754 454.5 h16 v-12" fill="none" stroke="#fafafa" stroke-width="1"/><path d="M754 455 v-13 h17" fill="none" stroke="#8a8a8a" stroke-width="1"/><rect x="779.5" y="442" width="17" height="13" fill="#000"/><path d="M780 454.5 h16 v-12" fill="none" stroke="#fafafa" stroke-width="1"/><path d="M780 455 v-13 h17" fill="none" stroke="#8a8a8a" stroke-width="1"/><rect x="805.5" y="442" width="17" height="13" fill="#000"/><path d="M806 454.5 h16 v-12" fill="none" stroke="#fafafa" stroke-width="1"/><path d="M806 455 v-13 h17" fill="none" stroke="#8a8a8a" stroke-width="1"/><rect x="831.5" y="442" width="17" height="13" fill="#000"/><path d="M832 454.5 h16 v-12" fill="none" stroke="#fafafa" stroke-width="1"/><path d="M832 455 v-13 h17" fill="none" stroke="#8a8a8a" stroke-width="1"/><rect x="857.5" y="442" width="17" height="13" fill="#000"/><path d="M858 454.5 h16 v-12" fill="none" stroke="#fafafa" stroke-width="1"/><path d="M858 455 v-13 h17" fill="none" stroke="#8a8a8a" stroke-width="1"/><rect x="883.5" y="442" width="17" height="13" fill="#000"/><path d="M884 454.5 h16 v-12" fill="none" stroke="#fafafa" stroke-width="1"/><path d="M884 455 v-13 h17" fill="none" stroke="#8a8a8a" stroke-width="1"/><rect x="701.5" y="462" width="17" height="13" fill="#000"/><path d="M702 474.5 h16 v-12" fill="none" stroke="#fafafa" stroke-width="1"/><path d="M702 475 v-13 h17" fill="none" stroke="#8a8a8a" stroke-width="1"/><rect x="727.5" y="462" width="17" height="13" fill="#000"/><path d="M728 474.5 h16 v-12" fill="none" stroke="#fafafa" stroke-width="1"/><path d="M728 475 v-13 h17" fill="none" stroke="#8a8a8a" stroke-width="1"/><rect x="753.5" y="462" width="17" height="13" fill="#000"/><path d="M754 474.5 h16 v-12" fill="none" stroke="#fafafa" stroke-width="1"/><path d="M754 475 v-13 h17" fill="none" stroke="#8a8a8a" stroke-width="1"/><rect x="779.5" y="462" width="17" height="13" fill="#000"/><path d="M780 474.5 h16 v-12" fill="none" stroke="#fafafa" stroke-width="1"/><path d="M780 475 v-13 h17" fill="none" stroke="#8a8a8a" stroke-width="1"/><rect x="805.5" y="462" width="17" height="13" fill="#000"/><path d="M806 474.5 h16 v-12" fill="none" stroke="#fafafa" stroke-width="1"/><path d="M806 475 v-13 h17" fill="none" stroke="#8a8a8a" stroke-width="1"/><rect x="831.5" y="462" width="17" height="13" fill="#000"/><path d="M832 474.5 h16 v-12" fill="none" stroke="#fafafa" stroke-width="1"/><path d="M832 475 v-13 h17" fill="none" stroke="#8a8a8a" stroke-width="1"/><rect x="857.5" y="462" width="17" height="13" fill="#000"/><path d="M858 474.5 h16 v-12" fill="none" stroke="#fafafa" stroke-width="1"/><path d="M858 475 v-13 h17" fill="none" stroke="#8a8a8a" stroke-width="1"/><rect x="883.5" y="462" width="17" height="13" fill="#000"/><path d="M884 474.5 h16 v-12" fill="none" stroke="#fafafa" stroke-width="1"/><path d="M884 475 v-13 h17" fill="none" stroke="#8a8a8a" stroke-width="1"/></svg>
<span class="t" style="left:696.6px;top:421.4px;font-size:12px;line-height:16px;color:#000;font-family:'Liberation Serif', serif;letter-spacing:0.699px;">Custom colors:</span>
<div class="b" style="left:698px;top:490.5px;width:199px;height:18.5px;background:#f4f4f4;border:1px solid #adb2b5;border-radius:3px;"></div><span class="t" style="left:737.2px;top:492.4px;font-size:12px;line-height:16px;color:#8f8f8f;font-family:'Liberation Sans', 'Noto Sans CJK SC', sans-serif;font-weight:300;letter-spacing:0.191px;">规定自定义颜色(D) &gt;&gt;</span>
<div class="b" style="left:698px;top:514px;width:64px;height:19px;background:linear-gradient(to bottom,#eaf6fd 0%,#d9f0fc 48%,#bee6fd 52%,#a7d9f5 100%);border:1px solid #3c7fb1;box-shadow:inset 0 0 0 1px #48d8fb;border-radius:3px;"></div><span class="t" style="left:723.7px;top:516.0px;font-size:12.5px;line-height:16.5px;color:#000;font-family:'Liberation Serif', serif;transform-origin:0 50%;transform:scale(0.6976,1);">OK</span>
<div class="b" style="left:766px;top:514px;width:64px;height:19px;background:linear-gradient(to bottom,#f2f2f2 0%,#ebebeb 48%,#dddddd 52%,#cfcfcf 100%);border:1px solid #707070;box-shadow:inset 0 0 0 1px rgba(255,255,255,.85);border-radius:3px;"></div><span class="t" style="left:780.0px;top:516.2px;font-size:12px;line-height:16px;color:#000;font-family:'Liberation Serif', serif;letter-spacing:0.445px;">Cancel</span>
<div class="b" style="left:919px;top:270px;width:199px;height:173px;background:linear-gradient(to bottom,rgba(128,128,128,0) 0%,rgba(128,128,128,1) 100%),linear-gradient(to right,#ff0000 0%,#ffff00 16.67%,#00ff00 33.33%,#00ffff 50%,#0000ff 66.67%,#ff00ff 83.33%,#ff0000 100%);"></div>
<div class="b" style="left:1134.5px;top:270px;width:23.5px;height:173px;background:linear-gradient(to bottom,#ffffff,#000000);border-top:1px solid #9a9a9a;border-left:1px solid #9a9a9a;"></div>
<svg class="b" style="left:1158px;top:308px;" width="8" height="12" viewBox="0 0 8 12"><path d="M6.2 1 v10 l-5 -5z" fill="#000"/></svg>
<svg class="b" style="left:1040px;top:425px;" width="24" height="18" viewBox="0 0 24 18"><path d="M12.2 8 v4.6" stroke="#000" stroke-width="2.6"/><path d="M3.4 16.4 h4.6 M17 16.4 h5" stroke="#000" stroke-width="2.2"/></svg>
<div class="b" style="left:919px;top:450px;width:59px;height:38px;background:#c0c0c0;border-top:1px solid #9c9c9c;border-left:1px solid #9c9c9c;"></div>
<span class="t" style="left:919.4px;top:490.2px;font-size:12px;line-height:16px;color:#000;font-family:'Liberation Serif', serif;letter-spacing:1.292px;">olor|Solid</span>
<span class="t" style="left:1057.2px;transform:translateX(-100%);top:451.5px;font-size:12px;line-height:16px;color:#000;font-family:'Liberation Serif', serif;">Hue:</span>
<span class="t" style="left:1127.0px;transform:translateX(-100%);top:451.5px;font-size:12px;line-height:16px;color:#000;font-family:'Liberation Serif', serif;">Red:</span>
<div class="b" style="left:1063.3px;top:450.5px;width:26px;height:17px;background:#fff;border:1px solid #e3e9ef;border-top-color:#abadb3;"></div>
<div class="b" style="left:1132px;top:450.5px;width:26px;height:17px;background:#fff;border:1px solid #e3e9ef;border-top-color:#abadb3;"></div>
<span class="t" style="left:1066.0px;top:452.0px;font-size:11px;line-height:15px;color:#000;">160</span>
<span class="t" style="left:1135.0px;top:452.0px;font-size:11px;line-height:15px;color:#000;">192</span>
<span class="t" style="left:1057.2px;transform:translateX(-100%);top:472.4px;font-size:12px;line-height:16px;color:#000;font-family:'Liberation Serif', serif;">Sat:</span>
<span class="t" style="left:1127.0px;transform:translateX(-100%);top:472.4px;font-size:12px;line-height:16px;color:#000;font-family:'Liberation Serif', serif;">Green:</span>
<div class="b" style="left:1063.3px;top:471.5px;width:26px;height:17px;background:#fff;border:1px solid #e3e9ef;border-top-color:#abadb3;"></div>
<div class="b" style="left:1132px;top:471.5px;width:26px;height:17px;background:#fff;border:1px solid #e3e9ef;border-top-color:#abadb3;"></div>
<span class="t" style="left:1066.0px;top:472.9px;font-size:11px;line-height:15px;color:#000;">0</span>
<span class="t" style="left:1135.0px;top:472.9px;font-size:11px;line-height:15px;color:#000;">192</span>
<span class="t" style="left:1057.2px;transform:translateX(-100%);top:493.2px;font-size:12px;line-height:16px;color:#000;font-family:'Liberation Serif', serif;">Lum:</span>
<span class="t" style="left:1127.0px;transform:translateX(-100%);top:493.2px;font-size:12px;line-height:16px;color:#000;font-family:'Liberation Serif', serif;">Blue:</span>
<div class="b" style="left:1063.3px;top:492.3px;width:26px;height:17px;background:#fff;border:1px solid #e3e9ef;border-top-color:#abadb3;"></div>
<div class="b" style="left:1132px;top:492.3px;width:26px;height:17px;background:#fff;border:1px solid #e3e9ef;border-top-color:#abadb3;"></div>
<span class="t" style="left:1066.0px;top:493.7px;font-size:11px;line-height:15px;color:#000;">181</span>
<span class="t" style="left:1135.0px;top:493.7px;font-size:11px;line-height:15px;color:#000;">192</span>
<div class="b" style="left:920.5px;top:514px;width:237.5px;height:19px;background:linear-gradient(to bottom,#f2f2f2 0%,#ebebeb 48%,#dddddd 52%,#cfcfcf 100%);border:1px solid #707070;box-shadow:inset 0 0 0 1px rgba(255,255,255,.85);border-radius:3px;"></div><span class="t" style="left:978.2px;top:516.2px;font-size:12px;line-height:16px;color:#000;font-family:'Liberation Serif', serif;letter-spacing:0.682px;">Add to Custom Colors</span>
<!-- title / watermark -->
<div class="b" style="left:0px;top:0px;width:1920px;height:1px;background:#e6e8ee;"></div>
<div class="b" style="left:0px;top:0px;width:1px;height:150px;background:#eceef2;"></div>
<span class="t" style="left:1008.3px;top:8.9px;font-size:13px;line-height:17px;color:#1a1a1a;letter-spacing:0.272px;">3D-Tool</span>
<div class="b" style="left:1px;top:30px;width:59px;height:24px;background:#e9966a;"></div>
<div class="b" style="left:60px;top:31px;width:79.5px;height:23px;background:#f5f6f7;border:1px solid #c6c6c6;border-bottom:none;"></div>
<span class="t" style="left:76.3px;top:35.5px;font-size:11.5px;line-height:15.5px;color:#1a1a1a;letter-spacing:-0.016px;">3D-Mode</span>
<span class="t" style="left:158.5px;top:35.5px;font-size:11.5px;line-height:15.5px;color:#1a1a1a;letter-spacing:-0.030px;">2D-Mode</span>
<span class="t" style="left:240.0px;top:35.5px;font-size:11.5px;line-height:15.5px;color:#1a1a1a;letter-spacing:-0.034px;">Options</span>
<svg class="b" style="left:0px;top:0px;" width="300" height="60" viewBox="0 0 300 60"><path d="M6 10.6 h9.6" stroke="#f2b400" stroke-width="1.6" stroke-dasharray="1.4 0.5"/><rect x="8.2" y="12.6" width="6.6" height="6" fill="#27b3f2" stroke="#1687c8" stroke-width="0.8"/><circle cx="17.6" cy="20.4" r="3.4" fill="#2b3f8a"/><path d="M45 13 h5 l1.4 1.4 h7.6 v7.6 h-14z" fill="#f3d672" stroke="#c9a437" stroke-width="0.8"/><path d="M53 10.4 q3 -3 5.4 0.4 M58.6 8.6 v2.6 h-2.6" fill="none" stroke="#444" stroke-width="1"/><path d="M71 15.2 h5 l-2.5 2.8z" fill="#111"/><rect x="85.5" y="10.5" width="11" height="11" fill="#fdf6f6" stroke="#d9bcbc" stroke-width="1"/><rect x="91" y="14.4" width="8.6" height="8" fill="#fff" stroke="#b02a3a" stroke-width="1.2"/><path d="M93 16.4 l4.6 4.2 M97.6 16.4 l-4.6 4.2" stroke="#c0203a" stroke-width="1.1"/><rect x="107.8" y="16.6" width="13" height="5.6" fill="#c9c9c9" stroke="#8a8a8a" stroke-width="0.9"/><path d="M110.6 18.6 v-10 h5.6 l2 2 v8z" fill="#fff" stroke="#5c7ea8" stroke-width="1"/><path d="M112 11.6 h5 M112 13.6 h5 M112 15.6 h5" stroke="#4a6f9c" stroke-width="0.9"/><rect x="130.6" y="8.6" width="11" height="9" fill="#dbe9f8" stroke="#8a9ab0" stroke-width="1"/><rect x="128.6" y="16" width="14.8" height="6.4" fill="#3f7fc4"/><rect x="151.8" y="10" width="7.6" height="9.6" fill="#d8c48a" stroke="#a8924f" stroke-width="0.9"/><rect x="153.6" y="8.4" width="4" height="2.6" fill="#b9a468"/><rect x="154.6" y="14.4" width="11" height="8" fill="#cfe2f6" stroke="#4a7fc0" stroke-width="1.1"/><path d="M156 21 l3 -3 l2 1.6 l2 -2.4 l1.6 3.8z" fill="#8fb8e6"/><path d="M179.5 12 v18" stroke="#bdbdbd" stroke-width="1"/></svg>
<span class="t" style="left:136.0px;transform:translateX(-50%);top:15.9px;font-size:6px;line-height:7px;color:#fff;font-weight:bold;">PNG</span>
<svg class="b" style="left:0px;top:0px;" width="1920" height="60" viewBox="0 0 1920 60"><path d="M1863.5 19 h11.6" stroke="#111" stroke-width="2.2"/><path d="M1883.6 12.6 h9.4 v9 h-9.4z" fill="none" stroke="#111" stroke-width="1.3"/><path d="M1883.6 13.2 h9.4" stroke="#111" stroke-width="2"/><path d="M1886 12 v-2.6 h9.4 v9 h-2.4" fill="none" stroke="#111" stroke-width="1.2"/><path d="M1903 9.2 L1914.4 20.6 M1914.4 9.2 L1903 20.6" stroke="#111" stroke-width="1.9"/><defs><linearGradient id="upg" x1="0" x2="0" y1="0" y2="1"><stop offset="0" stop-color="#f4f8fe"/><stop offset="1" stop-color="#dbe6f8"/></linearGradient></defs><rect x="1709.5" y="28.5" width="103" height="24" rx="3.5" fill="url(#upg)" stroke="#6aa0e8" stroke-width="1"/><path d="M1713 28.5 h25.6 v24 h-25.6 q-3.5 0 -3.5 -3.5 v-17 q0 -3.5 3.5 -3.5z" fill="#5b9cf2"/><circle cx="1724.4" cy="36.6" r="3.1" fill="none" stroke="#fff" stroke-width="2.5"/><circle cx="1719.4" cy="43" r="3.3" fill="none" stroke="#fff" stroke-width="2.5"/><circle cx="1729.2" cy="43" r="3.3" fill="none" stroke="#fff" stroke-width="2.5"/><path d="M1881 42.4 l4.6 -5 l4.6 5 l-1.6 1.4 l-3 -2.6 l-3 2.6z" fill="#9a9a9a" stroke="#666" stroke-width="0.9" stroke-linejoin="round"/><defs><radialGradient id="hlp" cx="0.4" cy="0.3" r="0.8"><stop offset="0" stop-color="#7fb2ee"/><stop offset="1" stop-color="#2a62c0"/></radialGradient></defs><circle cx="1906.8" cy="41.2" r="8" fill="url(#hlp)" stroke="#2f5fb0" stroke-width="0.8"/></svg>
<span class="t" style="left:1907.0px;transform:translateX(-50%);top:33.1px;font-size:13px;line-height:17px;color:#fff;font-weight:bold;">?</span>
<span class="t" style="left:1752.0px;top:32.5px;font-size:12.5px;line-height:16.5px;color:#7aa8e6;font-family:'Liberation Sans', 'Noto Sans CJK SC', sans-serif;letter-spacing:-0.504px;">拖拽上传</span>
<svg class="b" style="left:0px;top:0px;" width="70" height="70" viewBox="0 0 70 70"><g opacity="0.87"><ellipse cx="34" cy="44.6" rx="27.6" ry="14.8" transform="rotate(-17 34 44.6)" fill="#f7a131"/><path d="M12.6 50 h6.6 v10.4 h-6.6z M28.6 54 h9.6 v12.4 h-9.6z M48.2 46 h6 v14.2 h-6z" fill="#f7a131"/><ellipse cx="30.6" cy="29.4" rx="27.8" ry="16.6" transform="rotate(-22 30.6 29.4)" fill="#4b9ddb"/><ellipse cx="32.4" cy="38.2" rx="26.8" ry="14.2" transform="rotate(-17 32.4 38.2)" fill="#fdf0e4"/><ellipse cx="32.8" cy="36.2" rx="23.6" ry="11" transform="rotate(-17 32.8 36.2)" fill="#3f86c1"/><path d="M15.8 38.6 L27.4 29.2 L29.4 30.6 V46.8 H19.2 V38.6z" fill="#fbeee4"/><path d="M21.6 40.4 h4.6 v4 h-4.6z" fill="#f6d9c6"/><path d="M38.2 25 L47.6 22.2 V42 L38.2 46z" fill="#fbe6d6"/><path d="M29.4 30.6 L38.2 25.4 V46 L29.4 47z" fill="#3a7db6"/></g><circle cx="17.6" cy="20.4" r="3.3" fill="#2b3f8a" opacity="0.8"/></svg>
<span class="t" style="left:66.0px;top:15.6px;font-size:26.5px;line-height:30px;color:#4da4ea;font-family:'Liberation Serif', 'Noto Serif CJK SC', serif;font-weight:900;letter-spacing:0.260px;-webkit-text-stroke:0.9px #4da4ea;opacity:.84;">河东软件园</span>
<span class="t" style="left:66.8px;top:45.2px;font-size:20px;line-height:22px;color:#5db35d;font-family:'Liberation Serif', serif;font-weight:bold;transform-origin:0 50%;transform:scale(1.0088,0.9);opacity:.88;">www.pc0359.cn</span>
</body></html>
